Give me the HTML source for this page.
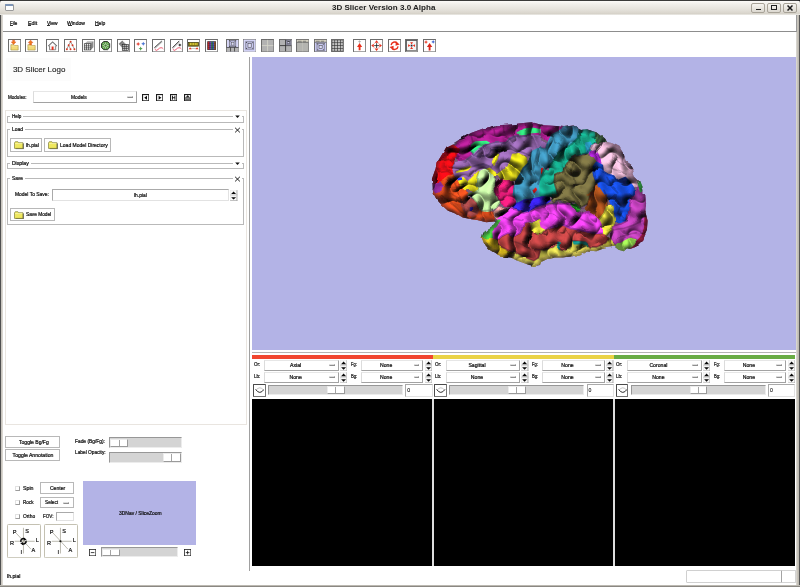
<!DOCTYPE html><html><head><meta charset="utf-8"><title>3D Slicer</title><style>
html,body{margin:0;padding:0;}
body{width:800px;height:587px;overflow:hidden;background:#fff;font-family:"Liberation Sans",sans-serif;font-size:5px;color:#111;position:relative;}
div,span,svg{position:absolute;box-sizing:border-box;}
.t{white-space:nowrap;line-height:1;color:#111;-webkit-text-stroke:0.22px #111;}
#root{left:0;top:0;width:800px;height:587px;will-change:transform;}
.btn{background:#fff;border:1px solid #b8b8b8;}
.lf{border:1px solid #b9b9b9;}
.lbl{background:#fff;padding:0 2px;}
.trough{background:#d4d4d4;border-top:1px solid #979797;border-left:1px solid #979797;border-bottom:1px solid #ececec;border-right:1px solid #ececec;}
.thumb{background:#fff;border-top:0.6px solid #ececec;border-left:0.6px solid #ececec;border-right:1px solid #9a9a9a;border-bottom:1px solid #9a9a9a;}
.thumb i{position:absolute;left:50%;top:0;bottom:0;width:0.9px;background:#a4a4a4;margin-left:-0.6px}
.ent{background:#fff;border-top:1px solid #aaa;border-left:1px solid #aaa;border-right:1px solid #e2e2e2;border-bottom:1px solid #e2e2e2;}
.dd{background:#fff;border-top:1px solid #e6e6e6;border-left:1px solid #dcdcdc;border-right:1px solid #a2a2a2;border-bottom:1px solid #a2a2a2;}
.ind{width:5.8px;height:2.3px;background:#efefef;border-top:0.5px solid #dedede;border-left:0.5px solid #dedede;border-bottom:0.7px solid #8e8e8e;border-right:0.7px solid #8e8e8e;}
</style></head><body><div id="root">
<div style="left:0;top:0;width:800px;height:587px;background:#fff;"></div>
<div style="left:0;top:0;width:800px;height:15.2px;background:linear-gradient(#3a3a3a 0,#3a3a3a 0.5px,#fbfaf8 1.1px,#f1efeb 4px,#e6e3dd 9px,#d9d5cc 13.4px,#cdc9c0 14px,#f4f3f0 14.8px,#fff 15.2px);"></div>
<svg style="left:0;top:0;" width="800" height="4" viewBox="0 0 800 4"><path d="M0 0H3.2A3.2 3.2 0 0 0 0 3.2Z M800 0H796.8A3.2 3.2 0 0 1 800 3.2Z" fill="#1a1a1a"/></svg>
<div class="t" style="left:331.9px;top:4px;font-size:8px;font-weight:bold;color:#222;-webkit-text-stroke:0;transform:scaleX(1.005);transform-origin:0 0;">3D Slicer Version 3.0 Alpha</div>
<div style="left:4.9px;top:4.1px;width:9px;height:6.9px;background:#fdfdfd;border:0.8px solid #9a9a9a;border-radius:1px;"></div>
<div style="left:5.3px;top:4.4px;width:8.2px;height:1.5px;background:#7d94b6;border-radius:0.6px 0.6px 0 0;"></div>
<div style="left:751px;top:2.5px;width:14px;height:10.5px;border:1px solid #a8a398;border-radius:2px;background:linear-gradient(#f6f4f0,#dcd8d0);"></div>
<div style="left:767px;top:2.5px;width:14px;height:10.5px;border:1px solid #a8a398;border-radius:2px;background:linear-gradient(#f6f4f0,#dcd8d0);"></div>
<div style="left:782.5px;top:2.5px;width:14px;height:10.5px;border:1px solid #a8a398;border-radius:2px;background:linear-gradient(#f6f4f0,#dcd8d0);"></div>
<div style="left:755.5px;top:8.5px;width:5px;height:1.6px;background:#222;"></div>
<div style="left:771px;top:5px;width:5.6px;height:5px;border:1px solid #222;border-top:1.8px solid #222;"></div>
<svg style="left:786.5px;top:5px;" width="6" height="6" viewBox="0 0 6 6"><path d="M0.5 0.5L5.5 5.5M5.5 0.5L0.5 5.5" stroke="#1a1a1a" stroke-width="1.5"/></svg>
<div style="left:0;top:14.6px;width:3.4px;height:572.4px;background:linear-gradient(90deg,#505050 0,#505050 0.7px,#bfbbb3 0.9px,#dcd9d3 2.6px,#fff 3.4px);"></div>
<div style="left:796px;top:15px;width:4px;height:572px;background:linear-gradient(90deg,#fff 0,#cfccc5 0.6px,#bdb9b0 2.6px,#555 3.2px);"></div>
<div style="left:0;top:584.5px;width:800px;height:2.5px;background:linear-gradient(#c9c6bf,#aaa69e 60%,#555);"></div>
<div style="left:3px;top:15px;width:793.5px;height:16.5px;background:#fff;border-bottom:1px solid #8d8d8d;border-right:1px solid #9a9a9a;"></div>
<div class="t" style="left:10.10px;top:20.59px;font-size:5.3px;transform:scaleX(0.870);transform-origin:0 0;">File</div>
<div style="left:10.20px;top:25.45px;width:2.82px;height:0.5px;background:#333;"></div>
<div class="t" style="left:27.65px;top:20.59px;font-size:5.3px;transform:scaleX(1.018);transform-origin:0 0;">Edit</div>
<div style="left:27.75px;top:25.45px;width:3.60px;height:0.5px;background:#333;"></div>
<div class="t" style="left:47.00px;top:20.59px;font-size:5.3px;transform:scaleX(0.919);transform-origin:0 0;">View</div>
<div style="left:47.10px;top:25.45px;width:3.25px;height:0.5px;background:#333;"></div>
<div class="t" style="left:67.40px;top:20.59px;font-size:5.3px;transform:scaleX(0.950);transform-origin:0 0;">Window</div>
<div style="left:67.50px;top:25.45px;width:4.75px;height:0.5px;background:#333;"></div>
<div class="t" style="left:94.90px;top:20.59px;font-size:5.3px;transform:scaleX(0.946);transform-origin:0 0;">Help</div>
<div style="left:95.00px;top:25.45px;width:3.62px;height:0.5px;background:#333;"></div>
<svg style="left:7.8px;top:38.8px;" width="13.2" height="13.4" viewBox="0 0 21 21.3" preserveAspectRatio="none"><rect x="0.8" y="0.8" width="19.4" height="19.7" fill="#fff" stroke="#6c6c6c" stroke-width="1.6"/><path d="M4.6 17.6V9H9.6L10.6 10.4H16.2V17.6Z" fill="#f2da78" stroke="#a08a38" stroke-width="0.9"/><path d="M5.2 11.4H15.6" stroke="#fbeeb0" stroke-width="0.8"/><path d="M7.4 1.8H10.4V4.6H12.6L8.9 8.6L5.2 4.6H7.4Z" fill="#f07a1c" stroke="#d8441a" stroke-width="0.7"/><path d="M0.4 21H20.8V0.6" fill="none" stroke="#b8b8b8" stroke-width="0.7"/></svg>
<svg style="left:25.0px;top:38.8px;" width="13.2" height="13.4" viewBox="0 0 21 21.3" preserveAspectRatio="none"><rect x="0.8" y="0.8" width="19.4" height="19.7" fill="#fff" stroke="#6c6c6c" stroke-width="1.6"/><path d="M4.6 17.6V9H9.6L10.6 10.4H16.2V17.6Z" fill="#f2da78" stroke="#a08a38" stroke-width="0.9"/><path d="M5.2 11.4H15.6" stroke="#fbeeb0" stroke-width="0.8"/><path d="M7.4 9.4H10.4V5.8H12.6L8.9 1.8L5.2 5.8H7.4Z" fill="#f07a1c" stroke="#d8441a" stroke-width="0.7"/><path d="M0.4 21H20.8V0.6" fill="none" stroke="#b8b8b8" stroke-width="0.7"/></svg>
<svg style="left:46.3px;top:38.8px;" width="13.2" height="13.4" viewBox="0 0 21 21.3" preserveAspectRatio="none"><rect x="0.8" y="0.8" width="19.4" height="19.7" fill="#fff" stroke="#6c6c6c" stroke-width="1.6"/><path d="M3.6 11.2L10.5 4.6L17.4 11.2" fill="none" stroke="#6e6e6e" stroke-width="1.7"/><path d="M5.6 10.4V17.2H15.4V10.4" fill="#f4f4f4" stroke="#7a7a7a" stroke-width="1.4"/><rect x="9" y="12" width="3" height="5.4" fill="#e8301c"/><path d="M0.4 21H20.8V0.6" fill="none" stroke="#b8b8b8" stroke-width="0.7"/></svg>
<svg style="left:64.0px;top:38.8px;" width="13.2" height="13.4" viewBox="0 0 21 21.3" preserveAspectRatio="none"><rect x="0.8" y="0.8" width="19.4" height="19.7" fill="#fff" stroke="#6c6c6c" stroke-width="1.6"/><path d="M10.5 4.4L7.4 10L4.6 16M7.4 10L10.4 16M10.5 4.4L13.6 10L16.6 16" fill="none" stroke="#555" stroke-width="0.9"/><g fill="#d8341c"><circle cx="10.5" cy="4.2" r="1.5"/><circle cx="7.4" cy="10" r="1.5"/><circle cx="13.6" cy="10" r="1.5"/><circle cx="4.6" cy="16.2" r="1.5"/><circle cx="10.4" cy="16.2" r="1.5"/><circle cx="16.6" cy="16.2" r="1.5"/></g><path d="M0.4 21H20.8V0.6" fill="none" stroke="#b8b8b8" stroke-width="0.7"/></svg>
<svg style="left:81.8px;top:38.8px;" width="13.2" height="13.4" viewBox="0 0 21 21.3" preserveAspectRatio="none"><rect x="0.8" y="0.8" width="19.4" height="19.7" fill="#fff" stroke="#6c6c6c" stroke-width="1.6"/><path d="M4 7.6L8.4 3.6H18L18 13L14 17Z" fill="#b4b4b4"/><path d="M14 7.6L18 3.6V13L14 17Z" fill="#8a8a8a"/><rect x="3.6" y="7.6" width="10.4" height="9.8" fill="#fff" stroke="#222" stroke-width="1"/><path d="M7.1 7.6V17.4M10.5 7.6V17.4M3.6 10.9H14M3.6 14.1H14" stroke="#222" stroke-width="1"/><path d="M0.4 21H20.8V0.6" fill="none" stroke="#b8b8b8" stroke-width="0.7"/></svg>
<svg style="left:99.0px;top:38.8px;" width="13.2" height="13.4" viewBox="0 0 21 21.3" preserveAspectRatio="none"><rect x="0.8" y="0.8" width="19.4" height="19.7" fill="#fff" stroke="#6c6c6c" stroke-width="1.6"/><path d="M7.4 4L13.6 4L17 7.4V13.6L13.6 17H7.4L4 13.6V7.4Z" fill="#5a9a48" stroke="#262626" stroke-width="1.4"/><path d="M10.5 5.6V15.4M5.6 10.5H15.4M7 7L14 14M14 7L7 14" stroke="#cfe6c4" stroke-width="1.2"/><circle cx="10.5" cy="10.5" r="1.8" fill="#467f38"/><path d="M0.4 21H20.8V0.6" fill="none" stroke="#b8b8b8" stroke-width="0.7"/></svg>
<svg style="left:116.8px;top:38.8px;" width="13.2" height="13.4" viewBox="0 0 21 21.3" preserveAspectRatio="none"><rect x="0.8" y="0.8" width="19.4" height="19.7" fill="#fff" stroke="#6c6c6c" stroke-width="1.6"/><path d="M2.6 7.4L8.4 2.4L16 10.6L9.6 15.6Z" fill="#8c8c8c"/><path d="M4 8.6L9.6 3.6M6 10.6L11.6 5.6M8 12.6L13.6 7.6" stroke="#555" stroke-width="0.7"/><rect x="8.4" y="8.6" width="9.6" height="9.4" fill="#d8d8d8" stroke="#222" stroke-width="1"/><path d="M11.6 8.6V18M14.8 8.6V18M8.4 11.7H18M8.4 14.9H18" stroke="#222" stroke-width="1"/><path d="M0.4 21H20.8V0.6" fill="none" stroke="#b8b8b8" stroke-width="0.7"/></svg>
<svg style="left:134.3px;top:38.8px;" width="13.2" height="13.4" viewBox="0 0 21 21.3" preserveAspectRatio="none"><rect x="0.8" y="0.8" width="19.4" height="19.7" fill="#fff" stroke="#6c6c6c" stroke-width="1.6"/><path d="M6.6 4.7L7.656 6.944L9.899999999999999 8L7.656 9.056000000000001L6.6 11.3L5.544 9.056000000000001L3.3 8L5.544 6.944Z" fill="#e8483a"/><path d="M14.8 4.3L15.856000000000002 6.544L18.1 7.6L15.856000000000002 8.655999999999999L14.8 10.899999999999999L13.744 8.655999999999999L11.5 7.6L13.744 6.544Z" fill="#4c78d6"/><path d="M10.6 11.899999999999999L11.655999999999999 14.143999999999998L13.899999999999999 15.2L11.655999999999999 16.256L10.6 18.5L9.544 16.256L7.3 15.2L9.544 14.143999999999998Z" fill="#4c9c4c"/><path d="M0.4 21H20.8V0.6" fill="none" stroke="#b8b8b8" stroke-width="0.7"/></svg>
<svg style="left:152.0px;top:38.8px;" width="13.2" height="13.4" viewBox="0 0 21 21.3" preserveAspectRatio="none"><rect x="0.8" y="0.8" width="19.4" height="19.7" fill="#fff" stroke="#6c6c6c" stroke-width="1.6"/><path d="M4.6 14.8L16.4 4.2" stroke="#bdbdbd" stroke-width="1.6"/><path d="M3.8 13.8L15.6 3.2" stroke="#1e1e1e" stroke-width="1.3"/><path d="M4.4 16.2Q6.6 19.8 9.4 16.8T14.4 13.8T18 15.8" fill="none" stroke="#e8304c" stroke-width="1.25"/><path d="M0.4 21H20.8V0.6" fill="none" stroke="#b8b8b8" stroke-width="0.7"/></svg>
<svg style="left:169.5px;top:38.8px;" width="13.2" height="13.4" viewBox="0 0 21 21.3" preserveAspectRatio="none"><rect x="0.8" y="0.8" width="19.4" height="19.7" fill="#fff" stroke="#6c6c6c" stroke-width="1.6"/><path d="M4.6 14.8L15.4 4.2" stroke="#bdbdbd" stroke-width="1.6"/><path d="M3.8 13.8L14.6 3.2" stroke="#1e1e1e" stroke-width="1.3"/><path d="M4.4 16.2Q6.6 19.8 9.4 16.8T14.4 13.8T18 15.8" fill="none" stroke="#e8304c" stroke-width="1.25"/><circle cx="15.6" cy="9.6" r="1.6" fill="#2a2a2a"/><path d="M13 9.6H18.2M15.6 7V12.2" stroke="#444" stroke-width="0.8"/><path d="M0.4 21H20.8V0.6" fill="none" stroke="#b8b8b8" stroke-width="0.7"/></svg>
<svg style="left:187.0px;top:38.8px;" width="13.2" height="13.4" viewBox="0 0 21 21.3" preserveAspectRatio="none"><rect x="0.8" y="0.8" width="19.4" height="19.7" fill="#fff" stroke="#6c6c6c" stroke-width="1.6"/><rect x="2.6" y="5.4" width="15.8" height="6" fill="#857818" stroke="#3a340c" stroke-width="1.1"/><path d="M5.4 6.2V9.6M8 6.2V9.6M10.6 6.2V9.6M13.2 6.2V9.6M15.8 6.2V9.6" stroke="#f4e444" stroke-width="1.3"/><path d="M5 15.2H16" stroke="#999" stroke-width="0.9"/><path d="M2.6 16.4L5 13L7.4 16.4Z M13.6 16.4L16 13L18.4 16.4Z" fill="#e8341c"/><path d="M0.4 21H20.8V0.6" fill="none" stroke="#b8b8b8" stroke-width="0.7"/></svg>
<svg style="left:204.8px;top:38.8px;" width="13.2" height="13.4" viewBox="0 0 21 21.3" preserveAspectRatio="none"><rect x="0.8" y="0.8" width="19.4" height="19.7" fill="#fff" stroke="#6c6c6c" stroke-width="1.6"/><rect x="3.6" y="3.6" width="13.8" height="13.8" fill="#2a2a2a"/><rect x="4.4" y="4.4" width="2.6" height="12.2" fill="#c82828"/><rect x="7.2" y="4.4" width="2.4" height="12.2" fill="#7a3ab0"/><rect x="9.8" y="4.4" width="2.4" height="12.2" fill="#3a8a6a"/><rect x="12.4" y="4.4" width="2" height="12.2" fill="#3a58b8"/><rect x="14.6" y="4.4" width="2" height="12.2" fill="#a8582a"/><path d="M4.4 7.4H16.6M4.4 10.6H16.6M4.4 13.6H16.6" stroke="#2a2a2a" stroke-width="0.7" opacity="0.75"/><path d="M0.4 21H20.8V0.6" fill="none" stroke="#b8b8b8" stroke-width="0.7"/></svg>
<svg style="left:225.8px;top:38.8px;" width="13.2" height="13.4" viewBox="0 0 21 21.3" preserveAspectRatio="none"><rect x="0.8" y="0.8" width="19.4" height="19.7" fill="#c9c9f2" stroke="#6c6c6c" stroke-width="1.6"/><rect x="5.4" y="2.6" width="10.2" height="9.6" fill="none" stroke="#555" stroke-width="0.9"/><rect x="8.256" y="5.0" width="4.4879999999999995" height="4.8" fill="#dcdcf6" stroke="#444" stroke-width="0.9"/><path d="M5.4 2.6l1.6 1.6M15.6 2.6l-1.6 1.6M5.4 12.2l1.6 -1.6M15.6 12.2l-1.6 -1.6" stroke="#222" stroke-width="1.2"/><rect x="1.2" y="13.6" width="18.6" height="6.2" fill="#b4b4b4"/><path d="M1 13.4H20M7.2 13.4V20M13.6 13.4V20" stroke="#333" stroke-width="1.2"/><rect x="1.6" y="1.6" width="2.4" height="11" fill="#d8d8f6"/><rect x="17" y="1.6" width="2.4" height="11" fill="#d8d8f6"/><path d="M0.4 21H20.8V0.6" fill="none" stroke="#b8b8b8" stroke-width="0.7"/></svg>
<svg style="left:243.3px;top:38.8px;" width="13.2" height="13.4" viewBox="0 0 21 21.3" preserveAspectRatio="none"><rect x="0.8" y="0.8" width="19.4" height="19.7" fill="#c9c9f2" stroke="#6c6c6c" stroke-width="1.6"/><rect x="4.6" y="4.6" width="11.8" height="11.4" fill="none" stroke="#555" stroke-width="0.9"/><rect x="7.904" y="7.449999999999999" width="5.192" height="5.7" fill="#dcdcf6" stroke="#444" stroke-width="0.9"/><path d="M4.6 4.6l1.6 1.6M16.4 4.6l-1.6 1.6M4.6 16.0l1.6 -1.6M16.4 16.0l-1.6 -1.6" stroke="#222" stroke-width="1.2"/><rect x="1.6" y="1.6" width="17.8" height="17.8" fill="none" stroke="#e2e2fa" stroke-width="1.4"/><path d="M0.4 21H20.8V0.6" fill="none" stroke="#b8b8b8" stroke-width="0.7"/></svg>
<svg style="left:261.0px;top:38.8px;" width="13.2" height="13.4" viewBox="0 0 21 21.3" preserveAspectRatio="none"><rect x="0.8" y="0.8" width="19.4" height="19.7" fill="#b2b2b2" stroke="#6c6c6c" stroke-width="1.6"/><path d="M10.5 1.4V19.6M1.4 10.5H19.6" stroke="#d8d8cc" stroke-width="1.2"/><path d="M0.4 21H20.8V0.6" fill="none" stroke="#b8b8b8" stroke-width="0.7"/></svg>
<svg style="left:278.8px;top:38.8px;" width="13.2" height="13.4" viewBox="0 0 21 21.3" preserveAspectRatio="none"><rect x="0.8" y="0.8" width="19.4" height="19.7" fill="#b2b2b2" stroke="#6c6c6c" stroke-width="1.6"/><path d="M10.5 1.4V19.6M1.4 10.5H19.6" stroke="#333" stroke-width="1.4"/><rect x="11.2" y="1.4" width="8.4" height="8.4" fill="#c9c9f2"/><rect x="12.4" y="2.6" width="6" height="6" fill="none" stroke="#555" stroke-width="0.9"/><rect x="14.08" y="4.1" width="2.64" height="3.0" fill="#dcdcf6" stroke="#444" stroke-width="0.9"/><path d="M12.4 2.6l1.6 1.6M18.4 2.6l-1.6 1.6M12.4 8.6l1.6 -1.6M18.4 8.6l-1.6 -1.6" stroke="#222" stroke-width="1.2"/><path d="M0.4 21H20.8V0.6" fill="none" stroke="#b8b8b8" stroke-width="0.7"/></svg>
<svg style="left:296.0px;top:38.8px;" width="13.2" height="13.4" viewBox="0 0 21 21.3" preserveAspectRatio="none"><rect x="0.8" y="0.8" width="19.4" height="19.7" fill="#b4b4b0" stroke="#6c6c6c" stroke-width="1.6"/><rect x="1.4" y="1.4" width="18.2" height="3.6" fill="#d8d4c4"/><path d="M1.4 5.2H19.6" stroke="#444" stroke-width="1"/><path d="M3 3.6H9M11 3.6H16" stroke="#666" stroke-width="1.2"/><path d="M10.5 5.4V19.6" stroke="#c8c8c0" stroke-width="0.8"/><path d="M0.4 21H20.8V0.6" fill="none" stroke="#b8b8b8" stroke-width="0.7"/></svg>
<svg style="left:313.8px;top:38.8px;" width="13.2" height="13.4" viewBox="0 0 21 21.3" preserveAspectRatio="none"><rect x="0.8" y="0.8" width="19.4" height="19.7" fill="#c9c9f2" stroke="#6c6c6c" stroke-width="1.6"/><rect x="1.4" y="1.4" width="18.2" height="3.6" fill="#d8d4c4"/><path d="M1.4 5.2H19.6" stroke="#444" stroke-width="1"/><path d="M3 3.6H9M11 3.6H16" stroke="#666" stroke-width="1.2"/><rect x="4.8" y="7.4" width="11.4" height="10.6" fill="none" stroke="#555" stroke-width="0.9"/><rect x="7.992000000000001" y="10.05" width="5.016" height="5.3" fill="#dcdcf6" stroke="#444" stroke-width="0.9"/><path d="M4.8 7.4l1.6 1.6M16.2 7.4l-1.6 1.6M4.8 18.0l1.6 -1.6M16.2 18.0l-1.6 -1.6" stroke="#222" stroke-width="1.2"/><path d="M0.4 21H20.8V0.6" fill="none" stroke="#b8b8b8" stroke-width="0.7"/></svg>
<svg style="left:331.3px;top:38.8px;" width="13.2" height="13.4" viewBox="0 0 21 21.3" preserveAspectRatio="none"><rect x="0.8" y="0.8" width="19.4" height="19.7" fill="#303030" stroke="#6c6c6c" stroke-width="1.6"/><rect x="2.0" y="2.0" width="3.5" height="3.5" fill="#c2c2c2"/><rect x="2.0" y="6.45" width="3.5" height="3.5" fill="#c2c2c2"/><rect x="2.0" y="10.9" width="3.5" height="3.5" fill="#c2c2c2"/><rect x="2.0" y="15.350000000000001" width="3.5" height="3.5" fill="#c2c2c2"/><rect x="6.45" y="2.0" width="3.5" height="3.5" fill="#c2c2c2"/><rect x="6.45" y="6.45" width="3.5" height="3.5" fill="#c2c2c2"/><rect x="6.45" y="10.9" width="3.5" height="3.5" fill="#c2c2c2"/><rect x="6.45" y="15.350000000000001" width="3.5" height="3.5" fill="#c2c2c2"/><rect x="10.9" y="2.0" width="3.5" height="3.5" fill="#c2c2c2"/><rect x="10.9" y="6.45" width="3.5" height="3.5" fill="#c2c2c2"/><rect x="10.9" y="10.9" width="3.5" height="3.5" fill="#c2c2c2"/><rect x="10.9" y="15.350000000000001" width="3.5" height="3.5" fill="#c2c2c2"/><rect x="15.350000000000001" y="2.0" width="3.5" height="3.5" fill="#c2c2c2"/><rect x="15.350000000000001" y="6.45" width="3.5" height="3.5" fill="#c2c2c2"/><rect x="15.350000000000001" y="10.9" width="3.5" height="3.5" fill="#c2c2c2"/><rect x="15.350000000000001" y="15.350000000000001" width="3.5" height="3.5" fill="#c2c2c2"/><path d="M0.4 21H20.8V0.6" fill="none" stroke="#b8b8b8" stroke-width="0.7"/></svg>
<svg style="left:352.6px;top:38.8px;" width="13.2" height="13.4" viewBox="0 0 21 21.3" preserveAspectRatio="none"><rect x="0.8" y="0.8" width="19.4" height="19.7" fill="#fff" stroke="#6c6c6c" stroke-width="1.6"/><path d="M10.5 1.6L11.332 3.3680000000000003L13.1 4.2L11.332 5.032L10.5 6.800000000000001L9.668 5.032L7.9 4.2L9.668 3.3680000000000003Z" fill="#b0b0b0"/><path d="M10.5 6.2L14.6 12.6H12V17.8H9V12.6H6.4Z" fill="#e8301c"/><path d="M0.4 21H20.8V0.6" fill="none" stroke="#b8b8b8" stroke-width="0.7"/></svg>
<svg style="left:370.0px;top:38.8px;" width="13.2" height="13.4" viewBox="0 0 21 21.3" preserveAspectRatio="none"><rect x="0.8" y="0.8" width="19.4" height="19.7" fill="#fff" stroke="#6c6c6c" stroke-width="1.6"/><path d="M10.5 2L13.6 6H7.4Z M10.5 19L13.6 15H7.4Z M2 10.5L6 7.4V13.6Z M19 10.5L15 7.4V13.6Z" fill="#e8301c"/><path d="M10.5 6.6V14.4M6.6 10.5H14.4" stroke="#222" stroke-width="1.3"/><path d="M6.2 6.2L7.6 7.6M14.8 6.2L13.4 7.6M6.2 14.8L7.6 13.4M14.8 14.8L13.4 13.4" stroke="#e8604c" stroke-width="0.8"/><path d="M0.4 21H20.8V0.6" fill="none" stroke="#b8b8b8" stroke-width="0.7"/></svg>
<svg style="left:387.8px;top:38.8px;" width="13.2" height="13.4" viewBox="0 0 21 21.3" preserveAspectRatio="none"><rect x="0.8" y="0.8" width="19.4" height="19.7" fill="#fff" stroke="#6c6c6c" stroke-width="1.6"/><path d="M5 9.6A5.6 5.6 0 0 1 14.4 6.4" fill="none" stroke="#e8301c" stroke-width="2.2"/><path d="M12.4 3.4L18.6 8.6L12 10.8Z" fill="#e8301c"/><path d="M16 11.8A5.6 5.6 0 0 1 6.6 15" fill="none" stroke="#e8301c" stroke-width="2.2"/><path d="M8.6 18L2.4 12.8L9 10.6Z" fill="#e8301c"/><path d="M0.4 21H20.8V0.6" fill="none" stroke="#b8b8b8" stroke-width="0.7"/></svg>
<svg style="left:405.1px;top:38.8px;" width="13.2" height="13.4" viewBox="0 0 21 21.3" preserveAspectRatio="none"><rect x="0.8" y="0.8" width="19.4" height="19.7" fill="#fff" stroke="#6c6c6c" stroke-width="1.6"/><rect x="2.4" y="2.4" width="16.2" height="16.2" fill="#f4f4f4" stroke="#555" stroke-width="1.4"/><path d="M18.8 3V18.8H3" stroke="#999" stroke-width="1.4" fill="none"/><path d="M10.5 8.6L8.2 5H12.8Z M10.5 12.4L8.2 16H12.8Z M8.6 10.5L5 8.2V12.8Z M12.4 10.5L16 8.2V12.8Z" fill="#e8301c"/><rect x="9.1" y="9.1" width="2.8" height="2.8" fill="#1a2a3a"/><path d="M0.4 21H20.8V0.6" fill="none" stroke="#b8b8b8" stroke-width="0.7"/></svg>
<svg style="left:423.0px;top:38.8px;" width="13.2" height="13.4" viewBox="0 0 21 21.3" preserveAspectRatio="none"><rect x="0.8" y="0.8" width="19.4" height="19.7" fill="#fff" stroke="#6c6c6c" stroke-width="1.6"/><path d="M4.8 1.6999999999999997L5.792 3.808L7.9 4.8L5.792 5.792L4.8 7.9L3.808 5.792L1.6999999999999997 4.8L3.808 3.808Z" fill="#e8402c"/><path d="M16.2 1.4999999999999996L17.192 3.6079999999999997L19.3 4.6L17.192 5.592L16.2 7.699999999999999L15.207999999999998 5.592L13.1 4.6L15.207999999999998 3.6079999999999997Z" fill="#3a62d0"/><path d="M10.5 6.4L14.8 12.8H12V18.4H9V12.8H6.2Z" fill="#d8281c"/><path d="M0.4 21H20.8V0.6" fill="none" stroke="#b8b8b8" stroke-width="0.7"/></svg>
<div style="left:6px;top:57.5px;width:64.5px;height:23.5px;background:#fcfcfc;"></div>
<div class="t" style="left:12.90px;top:66.12px;font-size:8px;-webkit-text-stroke:0.12px #222;color:#222;">3D Slicer Logo</div>
<div class="t" style="left:8.00px;top:94.66px;font-size:5.15px;transform:scaleX(0.886);transform-origin:0 0;">Modules:</div>
<div class="dd" style="left:32.6px;top:91.3px;width:104px;height:11.4px;"></div>
<div class="t" style="left:70.90px;top:94.66px;font-size:5.15px;transform:scaleX(0.952);transform-origin:0 0;">Models</div>
<div class="ind" style="left:127.4px;top:95.6px;"></div>
<svg style="left:141.9px;top:93.7px;" width="7.4" height="7.4" viewBox="0 0 7.4 7.4"><rect x="0.55" y="0.55" width="6.3" height="6.3" fill="#fff" stroke="#1c1c1c" stroke-width="1.1"/><path d="M5 1.7L2.2 3.7L5 5.7Z" fill="#0a0a0a"/></svg>
<svg style="left:155.9px;top:93.7px;" width="7.4" height="7.4" viewBox="0 0 7.4 7.4"><rect x="0.55" y="0.55" width="6.3" height="6.3" fill="#fff" stroke="#1c1c1c" stroke-width="1.1"/><path d="M2.6 1.7L5.4 3.7L2.6 5.7Z" fill="#0a0a0a"/></svg>
<svg style="left:169.9px;top:93.7px;" width="7.4" height="7.4" viewBox="0 0 7.4 7.4"><rect x="0.55" y="0.55" width="6.3" height="6.3" fill="#fff" stroke="#1c1c1c" stroke-width="1.1"/><path d="M2.5 1.7V5.7M4.9 1.7V5.7M2.5 3.7H4.9" stroke="#0a0a0a" stroke-width="0.9" fill="none"/></svg>
<svg style="left:183.9px;top:93.7px;" width="7.4" height="7.4" viewBox="0 0 7.4 7.4"><rect x="0.55" y="0.55" width="6.3" height="6.3" fill="#fff" stroke="#1c1c1c" stroke-width="1.1"/><rect x="1.8" y="3.3" width="3.8" height="2.6" fill="#8a8a8a" stroke="#222" stroke-width="0.5"/><path d="M3.7 1.1L5.4 3.1H2Z" fill="#222"/></svg>
<div style="left:5px;top:110.4px;width:242.4px;height:314.8px;border:1px solid #e9e5e0;"></div>
<div class="lf" style="left:7.2px;top:116.1px;width:236.4px;height:7.1px;"></div>
<div style="left:10.4px;top:115.1px;width:12.8px;height:3px;background:#fff;"></div>
<div class="t" style="left:11.90px;top:114.16px;font-size:5.15px;transform:scaleX(0.890);transform-origin:0 0;">Help</div>
<svg style="left:232.8px;top:113.5px;background:#fff;" width="9" height="5" viewBox="0 0 9 5"><path d="M2.2 1.4L6.8 1.4L4.5 4Z" fill="#111"/></svg>
<div class="lf" style="left:7.2px;top:129.3px;width:236.4px;height:27.5px;"></div>
<div style="left:10.4px;top:128.3px;width:14.399999999999999px;height:3px;background:#fff;"></div>
<div class="t" style="left:11.90px;top:127.36px;font-size:5.15px;transform:scaleX(0.961);transform-origin:0 0;">Load</div>
<svg style="left:232.8px;top:126.50000000000001px;background:#fff;" width="9" height="6.4" viewBox="0 0 9 6.4"><path d="M2.1 0.8L6.9 5.4M6.9 0.8L2.1 5.4" stroke="#111" stroke-width="0.95"/></svg>
<div class="lf" style="left:7.2px;top:163.1px;width:236.4px;height:5.9px;"></div>
<div style="left:10.4px;top:162.1px;width:20.200000000000003px;height:3px;background:#fff;"></div>
<div class="t" style="left:11.90px;top:161.16px;font-size:5.15px;">Display</div>
<svg style="left:232.8px;top:160.5px;background:#fff;" width="9" height="5" viewBox="0 0 9 5"><path d="M2.2 1.4L6.8 1.4L4.5 4Z" fill="#111"/></svg>
<div class="lf" style="left:7.2px;top:178.4px;width:236.4px;height:46.8px;"></div>
<div style="left:10.4px;top:177.4px;width:14.3px;height:3px;background:#fff;"></div>
<div class="t" style="left:11.90px;top:176.46px;font-size:5.15px;transform:scaleX(0.930);transform-origin:0 0;">Save</div>
<svg style="left:232.8px;top:175.6px;background:#fff;" width="9" height="6.4" viewBox="0 0 9 6.4"><path d="M2.1 0.8L6.9 5.4M6.9 0.8L2.1 5.4" stroke="#111" stroke-width="0.95"/></svg>
<div class="btn" style="left:10.2px;top:138.4px;width:31.6px;height:13.4px;"></div>
<svg style="left:14.2px;top:141.4px;" width="10.4" height="8.4" viewBox="0 0 10.4 8.4"><path d="M1.6 2.4L9.8 2.4L9.8 8.1L1.6 8.1Z" fill="#555"/><path d="M0.5 1.9L1.3 0.7L3.9 0.7L4.6 1.7L8.9 1.7L8.9 7.4L0.5 7.4Z" fill="#efe85e" stroke="#6b6b2a" stroke-width="0.6"/><path d="M1 2.6L8.4 2.6" stroke="#fbf8b8" stroke-width="0.7"/></svg>
<div class="t" style="left:25.90px;top:142.96px;font-size:5.15px;transform:scaleX(0.952);transform-origin:0 0;">lh.pial</div>
<div class="btn" style="left:44.2px;top:138.4px;width:66.4px;height:13.4px;"></div>
<svg style="left:48.3px;top:141.4px;" width="10.4" height="8.4" viewBox="0 0 10.4 8.4"><path d="M1.6 2.4L9.8 2.4L9.8 8.1L1.6 8.1Z" fill="#555"/><path d="M0.5 1.9L1.3 0.7L3.9 0.7L4.6 1.7L8.9 1.7L8.9 7.4L0.5 7.4Z" fill="#efe85e" stroke="#6b6b2a" stroke-width="0.6"/><path d="M1 2.6L8.4 2.6" stroke="#fbf8b8" stroke-width="0.7"/></svg>
<div class="t" style="left:60.20px;top:142.96px;font-size:5.15px;transform:scaleX(0.977);transform-origin:0 0;">Load Model Directory</div>
<div class="t" style="left:15.15px;top:192.16px;font-size:5.15px;transform:scaleX(0.959);transform-origin:0 0;">Model To Save:</div>
<div class="ent" style="left:52.2px;top:189.3px;width:177px;height:11.4px;"></div>
<div class="t" style="left:134.30px;top:192.76px;font-size:5.15px;transform:scaleX(0.952);transform-origin:0 0;">lh.pial</div>
<svg style="left:230.4px;top:189.6px;" width="7.4" height="11.2" viewBox="0 0 7.4 11.2"><rect x="0" y="0" width="7.4" height="5.6" fill="#fafafa"/><path d="M0 5.1499999999999995H7.4M6.95 0V5.6" stroke="#a6a6a6" stroke-width="0.9" fill="none"/><path d="M0 0.3H6.5M0.3 0V4.699999999999999" stroke="#e9e9e9" stroke-width="0.6" fill="none"/><rect x="0" y="5.6" width="7.4" height="5.6" fill="#fafafa"/><path d="M0 10.75H7.4M6.95 5.6V11.2" stroke="#a6a6a6" stroke-width="0.9" fill="none"/><path d="M0 5.8999999999999995H6.5M0.3 5.6V10.299999999999999" stroke="#e9e9e9" stroke-width="0.6" fill="none"/><path d="M1.1 4.1L3.6 1.5L6.1 4.1Z" fill="#0a0a0a"/><path d="M1.1 7.199999999999999L3.6 9.6L6.1 7.199999999999999Z" fill="#0a0a0a"/></svg>
<div class="btn" style="left:10.2px;top:207.6px;width:44.8px;height:13.4px;"></div>
<svg style="left:14.4px;top:210.8px;" width="10.4" height="8.4" viewBox="0 0 10.4 8.4"><path d="M1.6 2.4L9.8 2.4L9.8 8.1L1.6 8.1Z" fill="#555"/><path d="M0.5 1.9L1.3 0.7L3.9 0.7L4.6 1.7L8.9 1.7L8.9 7.4L0.5 7.4Z" fill="#efe85e" stroke="#6b6b2a" stroke-width="0.6"/><path d="M1 2.6L8.4 2.6" stroke="#fbf8b8" stroke-width="0.7"/></svg>
<div class="t" style="left:26.40px;top:212.46px;font-size:5.15px;transform:scaleX(0.927);transform-origin:0 0;">Save Model</div>
<div class="btn" style="left:5.4px;top:436.2px;width:54.6px;height:11.5px;"></div>
<div class="t" style="left:18.60px;top:439.96px;font-size:5.15px;transform:scaleX(0.982);transform-origin:0 0;">Toggle Bg/Fg</div>
<div class="btn" style="left:5.4px;top:449.3px;width:54.6px;height:11.5px;"></div>
<div class="t" style="left:12.60px;top:452.96px;font-size:5.15px;">Toggle Annotation</div>
<div class="t" style="left:75.30px;top:438.66px;font-size:5.15px;transform:scaleX(0.945);transform-origin:0 0;">Fade (Bg/Fg):</div>
<div class="t" style="left:74.60px;top:450.46px;font-size:5.15px;transform:scaleX(0.933);transform-origin:0 0;">Label Opacity:</div>
<div class="trough" style="left:109.2px;top:437.2px;width:73px;height:11.2px;"></div>
<div class="thumb" style="left:110.4px;top:438.6px;width:17.6px;height:8.6px;"><i></i></div>
<div class="trough" style="left:109.2px;top:451.8px;width:73px;height:11.2px;"></div>
<div class="thumb" style="left:163.2px;top:453.2px;width:17.6px;height:8.6px;"><i></i></div>
<div style="left:14.9px;top:486.09999999999997px;width:4.7px;height:4.7px;background:#fff;border-top:0.7px solid #e2e2e2;border-left:0.7px solid #e2e2e2;border-right:0.9px solid #9c9c9c;border-bottom:0.9px solid #9c9c9c;"></div>
<div class="t" style="left:23.20px;top:486.16px;font-size:5.15px;transform:scaleX(1.018);transform-origin:0 0;">Spin</div>
<div style="left:14.9px;top:500.4px;width:4.7px;height:4.7px;background:#fff;border-top:0.7px solid #e2e2e2;border-left:0.7px solid #e2e2e2;border-right:0.9px solid #9c9c9c;border-bottom:0.9px solid #9c9c9c;"></div>
<div class="t" style="left:23.20px;top:500.46px;font-size:5.15px;transform:scaleX(0.897);transform-origin:0 0;">Rock</div>
<div style="left:14.9px;top:514.4000000000001px;width:4.7px;height:4.7px;background:#fff;border-top:0.7px solid #e2e2e2;border-left:0.7px solid #e2e2e2;border-right:0.9px solid #9c9c9c;border-bottom:0.9px solid #9c9c9c;"></div>
<div class="t" style="left:23.20px;top:514.46px;font-size:5.15px;transform:scaleX(0.940);transform-origin:0 0;">Ortho</div>
<div class="btn" style="left:40.3px;top:482.4px;width:33.6px;height:11.2px;"></div>
<div class="t" style="left:49.90px;top:486.26px;font-size:5.15px;">Center</div>
<div class="btn" style="left:40.3px;top:497px;width:33.6px;height:11.4px;"></div>
<div class="t" style="left:44.60px;top:500.36px;font-size:5.15px;transform:scaleX(0.916);transform-origin:0 0;">Select</div>
<div class="ind" style="left:63.4px;top:501.6px;"></div>
<div class="t" style="left:42.70px;top:514.26px;font-size:5.15px;transform:scaleX(0.890);transform-origin:0 0;">FOV:</div>
<div class="ent" style="left:56.4px;top:511.8px;width:17.5px;height:9.2px;"></div>
<div style="left:83.4px;top:480.9px;width:112.3px;height:63.8px;background:#b3b3e6;"></div>
<div class="t" style="left:118.50px;top:510.76px;font-size:5.15px;transform:scaleX(0.963);transform-origin:0 0;">3DNav / SliceZoom</div>
<svg style="left:89.2px;top:549.2px;" width="7.2" height="7.2" viewBox="0 0 7.2 7.2"><rect x="0.4" y="0.4" width="6.4" height="6.4" fill="#fff" stroke="#222" stroke-width="0.8"/><path d="M1.8 3.6H5.4" stroke="#111" stroke-width="0.8"/></svg>
<svg style="left:183.8px;top:549.2px;" width="7.2" height="7.2" viewBox="0 0 7.2 7.2"><rect x="0.4" y="0.4" width="6.4" height="6.4" fill="#fff" stroke="#222" stroke-width="0.8"/><path d="M1.8 3.6H5.4" stroke="#111" stroke-width="0.8"/><path d="M3.6 1.8V5.4" stroke="#111" stroke-width="0.8"/></svg>
<div class="trough" style="left:101.3px;top:547.2px;width:76.6px;height:10.2px;"></div>
<div class="thumb" style="left:102.4px;top:548.6px;width:17.4px;height:7.6px;"><i></i></div>
<svg style="left:7.2px;top:524.2px;" width="34" height="34.2" viewBox="0 0 34 34.2"><rect x="0.5" y="0.5" width="33" height="33.2" rx="0.8" fill="#fff" stroke="#c4c1b2" stroke-width="1"/><path d="M16.45 3.8V29.5M7.7 17.3H27.7M8.95 8.9L23.95 25.2" stroke="#a9a79a" stroke-width="0.8" fill="none"/><path d="M13.95 17.900000000000002A2.5 2.5 0 0 1 17.65 15.0" fill="none" stroke="#0a0a0a" stroke-width="1.5"/><path d="M18.95 16.7A2.5 2.5 0 0 1 15.25 19.6" fill="none" stroke="#0a0a0a" stroke-width="1.5"/><path d="M16.849999999999998 13.4L19.65 15.4L16.849999999999998 16.7Z M16.05 21.2L13.25 19.2L16.05 17.900000000000002Z" fill="#0a0a0a"/><g font-family="Liberation Sans" font-size="5.6" fill="#111" stroke="#111" stroke-width="0.2"><text x="7.7" y="10.350000000000001" text-anchor="middle">P</text><text x="20.2" y="8.85" text-anchor="middle">S</text><text x="30.2" y="17.85" text-anchor="middle">L</text><text x="4.95" y="20.95" text-anchor="middle">R</text><text x="14.2" y="30.1" text-anchor="middle">I</text><text x="26.45" y="27.85" text-anchor="middle">A</text></g></svg>
<svg style="left:43.6px;top:524.2px;" width="34" height="34.2" viewBox="0 0 34 34.2"><rect x="0.5" y="0.5" width="33" height="33.2" rx="0.8" fill="#fff" stroke="#c4c1b2" stroke-width="1"/><path d="M16.45 3.8V29.5M7.7 17.3H27.7M8.95 8.9L23.95 25.2" stroke="#a9a79a" stroke-width="0.8" fill="none"/><circle cx="16.45" cy="17.3" r="1.05" fill="#111"/><g font-family="Liberation Sans" font-size="5.6" fill="#111" stroke="#111" stroke-width="0.2"><text x="7.7" y="10.350000000000001" text-anchor="middle">P</text><text x="20.2" y="8.85" text-anchor="middle">S</text><text x="30.2" y="17.85" text-anchor="middle">L</text><text x="4.95" y="20.95" text-anchor="middle">R</text><text x="14.2" y="30.1" text-anchor="middle">I</text><text x="26.45" y="27.85" text-anchor="middle">A</text></g></svg>
<div style="left:248.7px;top:57.4px;width:1.5px;height:513.4px;background:#a0a0a0;"></div>
<div style="left:251.7px;top:57px;width:544px;height:293px;background:#b3b3e6;"></div>
<svg style="left:420px;top:105px;" width="240" height="170" viewBox="0 0 240 170"><defs><clipPath id="bc"><path d="M14.2 90.0 L12.7 84.7 L11.9 74.0 L15.7 63.2 L16.5 58.6 L21.1 51.0 L26.5 41.8 L32.6 38.7 L40.2 34.1 L51.0 28.0 L63.2 23.4 L77.0 20.3 L90.8 19.6 L103.1 18.0 L112.3 17.3 L120.0 19.6 L124.2 20.3 L136.5 21.1 L144.1 21.9 L153.3 20.3 L161.0 24.9 L167.1 24.2 L176.3 27.2 L184.0 33.4 L186.3 37.2 L191.6 38.0 L199.3 41.8 L203.9 49.4 L205.4 55.6 L210.0 58.6 L214.6 66.3 L213.1 70.9 L219.2 77.0 L222.3 84.7 L222.3 90.0 L225.3 90.0 L225.3 91.1 L226.1 98.8 L225.3 106.5 L227.6 115.7 L226.9 124.8 L222.3 135.6 L216.1 141.7 L210.0 144.0 L207.0 143.2 L203.9 146.3 L198.5 144.8 L194.7 141.7 L188.6 142.5 L182.4 144.0 L176.3 146.3 L167.1 145.5 L161.0 149.4 L153.3 150.9 L142.6 152.4 L134.9 152.4 L127.3 154.0 L121.1 157.0 L120.0 160.1 L115.3 160.9 L109.2 160.1 L103.1 157.8 L97.0 155.5 L90.8 152.4 L83.2 151.7 L77.0 149.4 L69.4 144.8 L64.0 138.6 L61.7 132.5 L63.2 127.9 L67.8 124.1 L72.4 121.0 L75.5 117.2 L74.0 116.4 L66.3 117.2 L57.1 114.9 L49.4 114.1 L41.8 112.6 L34.1 108.0 L28.0 105.7 L21.9 100.3 L16.5 94.2 L14.2 90.0Z"/></clipPath><filter id="bl" x="-5%" y="-5%" width="110%" height="110%"><feGaussianBlur stdDeviation="0.7"/></filter><filter id="b2" x="-10%" y="-10%" width="120%" height="120%"><feGaussianBlur stdDeviation="1.6"/></filter><filter id="dp" x="0" y="0" width="100%" height="100%"><feTurbulence type="fractalNoise" baseFrequency="0.11" numOctaves="1" seed="3" result="t"/><feDisplacementMap in="SourceGraphic" in2="t" scale="3.4" xChannelSelector="R" yChannelSelector="G"/></filter><filter id="gy" x="0" y="0" width="100%" height="100%" color-interpolation-filters="sRGB"><feTurbulence type="turbulence" baseFrequency="0.062" numOctaves="1" seed="11" result="n"/><feGaussianBlur in="n" stdDeviation="0.7" result="nb"/><feDiffuseLighting in="nb" surfaceScale="8.5" diffuseConstant="1" lighting-color="#fff" result="lit"><feDistantLight azimuth="235" elevation="56"/></feDiffuseLighting><feComposite in="lit" in2="SourceGraphic" operator="arithmetic" k1="1.22" k2="0" k3="0" k4="0" result="m"/><feComposite in="m" in2="SourceGraphic" operator="in"/></filter></defs><g filter="url(#dp)"><g clip-path="url(#bc)"><rect x="0" y="0" width="240" height="170" fill="#7a5a78"/><g filter="url(#gy)"><g filter="url(#bl)"><polygon points="61.7,132.5 64.0,138.6 69.4,144.8 77.0,149.4 83.2,151.7 90.8,152.4 97.0,155.5 103.1,157.8 109.2,160.1 115.3,160.9 120.0,158.6 120.0,160.1 121.1,157.0 127.3,154.0 134.9,152.4 142.6,152.4 153.3,150.9 161.0,149.4 167.1,145.5 176.3,146.3 182.4,144.0 188.6,142.5 196.2,142.0 191.6,134.0 176.3,127.9 120.0,126.4 120.0,127.9 72.4,131.0" fill="#cfc84e" stroke="#cfc84e" stroke-width="1.2" stroke-linejoin="round"/><polygon points="61.7,132.5 64.0,138.6 69.4,144.8 77.0,149.4 83.2,151.7 90.8,152.4 93.1,147.8 84.7,143.2 78.6,140.2 77.0,135.6 72.4,132.5 66.3,132.5" fill="#d2b31c" stroke="#d2b31c" stroke-width="1.2" stroke-linejoin="round"/><polygon points="34.9,40.2 40.2,34.1 51.0,28.0 63.2,23.4 77.0,20.3 90.8,19.6 103.1,18.0 112.3,17.3 120.0,19.6 124.2,20.3 136.5,21.1 143.4,22.6 138.0,26.5 131.9,30.3 128.8,35.7 124.2,34.1 120.0,31.1 120.0,28.0 118.4,29.5 106.1,29.5 97.0,31.1 87.8,34.9 81.6,38.0 69.4,39.5 63.2,41.8 57.1,45.6 54.0,49.4 51.0,51.7 44.8,56.3 38.7,55.6 34.1,51.0 35.7,43.3" fill="#a31b88" stroke="#a31b88" stroke-width="1.2" stroke-linejoin="round"/><polygon points="97.0,28.0 103.1,24.2 112.3,23.1 119.9,24.6 118.4,27.2 110.7,28.0 101.6,29.2" fill="#2fd474" stroke="#2fd474" stroke-width="1.2" stroke-linejoin="round"/><polygon points="51.0,39.5 55.6,36.9 66.3,36.4 69.4,38.0 63.2,41.8 57.9,45.2 54.0,48.7 50.2,45.2" fill="#2fd474" stroke="#2fd474" stroke-width="1.2" stroke-linejoin="round"/><polygon points="120.0,24.6 120.0,24.9 120.0,28.0 120.0,28.3" fill="#2fd474" stroke="#2fd474" stroke-width="1.2" stroke-linejoin="round"/><polygon points="14.2,81.6 11.9,74.0 15.7,63.2 16.5,58.6 21.1,51.0 26.5,41.8 32.6,38.7 35.7,41.0 39.5,44.8 35.7,49.4 34.9,51.0 33.4,58.6 31.1,63.2 32.6,67.8 28.0,70.9 23.4,74.0 19.6,77.0" fill="#e60f12" stroke="#e60f12" stroke-width="1.2" stroke-linejoin="round"/><polygon points="14.2,90.0 12.7,84.7 14.2,81.6 19.6,77.0 24.2,74.0 28.0,70.9 33.4,68.6 38.0,74.0 40.2,80.1 46.4,84.7 48.7,90.0 49.4,90.0 47.9,90.0 46.4,90.0 47.9,92.7 55.6,97.3 58.6,100.3 60.2,104.9 66.3,106.5 74.0,107.2 74.7,111.1 74.0,116.4 66.3,117.2 57.1,114.9 49.4,114.1 41.8,112.6 34.1,108.0 28.0,105.7 21.9,100.3 16.5,94.2 14.2,90.0 14.2,90.0" fill="#d2481c" stroke="#d2481c" stroke-width="1.2" stroke-linejoin="round"/><polygon points="13.9,78.6 19.1,77.0 22.2,81.6 20.9,86.5 16.6,87.8 13.6,84.4" fill="#8c2c94" stroke="#8c2c94" stroke-width="1.2" stroke-linejoin="round"/><polygon points="41.8,97.3 49.4,92.7 57.1,97.3 60.2,101.9 58.6,108.0 52.5,111.1 46.4,109.5 43.3,104.9" fill="#9c4444" stroke="#9c4444" stroke-width="1.2" stroke-linejoin="round"/><polygon points="50.4,102.8 52.5,102.8 52.5,105.5 50.4,105.5" fill="#2a1cb0" stroke="#2a1cb0" stroke-width="1.2" stroke-linejoin="round"/><polygon points="31.8,64.0 35.7,57.1 44.8,55.6 51.0,51.0 57.1,44.8 66.3,39.5 77.0,37.2 84.7,38.0 87.8,34.1 97.0,30.3 109.2,29.5 120.0,31.1 120.0,32.6 120.0,32.6 121.1,35.7 127.3,38.7 125.7,43.3 120.0,43.3 118.4,43.3 112.3,46.4 109.2,51.0 103.1,49.4 97.0,46.4 92.4,49.4 90.8,55.6 87.8,61.7 81.6,66.3 75.5,67.8 69.4,63.2 64.8,64.0 60.2,66.3 57.1,72.4 55.6,80.1 51.0,84.7 47.9,81.6 46.4,75.5 43.3,72.4 38.0,74.0 33.4,68.6" fill="#8e62a6" stroke="#8e62a6" stroke-width="1.2" stroke-linejoin="round"/><polygon points="90.8,55.6 92.4,49.4 100.0,48.7 106.1,52.5 107.7,58.6 103.1,63.2 100.0,69.4 97.0,75.5 87.8,76.3 81.6,74.0 77.0,69.4 81.6,66.3 87.8,61.7" fill="#d6cf1e" stroke="#d6cf1e" stroke-width="1.2" stroke-linejoin="round"/><polygon points="36.4,67.1 44.8,63.2 51.0,61.7 47.9,64.8 41.8,66.3" fill="#d6cf1e" stroke="#d6cf1e" stroke-width="1.2" stroke-linejoin="round"/><polygon points="38.0,75.5 43.3,72.4 47.1,77.0 51.0,74.0 55.6,69.4 58.6,66.3 57.1,72.4 55.6,80.1 58.6,84.7 54.0,87.8 49.4,83.2 44.8,84.7 40.2,80.1" fill="#d6cf1e" stroke="#d6cf1e" stroke-width="1.2" stroke-linejoin="round"/><polygon points="72.4,57.1 76.3,47.9 78.6,49.4 77.0,55.6 74.0,60.2" fill="#d6cf1e" stroke="#d6cf1e" stroke-width="1.2" stroke-linejoin="round"/><polygon points="63.2,65.5 69.4,63.2 75.5,67.8 77.0,70.9 72.4,70.1 67.8,67.1" fill="#d6cf1e" stroke="#d6cf1e" stroke-width="1.2" stroke-linejoin="round"/><polygon points="37.5,73.7 41.0,73.2 41.8,75.2 38.0,75.8" fill="#2a2ad0" stroke="#2a2ad0" stroke-width="1.2" stroke-linejoin="round"/><polygon points="60.2,66.3 64.8,64.0 69.4,66.3 74.0,72.4 77.0,78.6 75.5,84.7 77.0,90.0 77.0,90.0 78.6,91.1 80.1,97.3 77.0,101.9 72.4,104.9 66.3,106.5 61.7,105.7 59.4,101.1 57.1,97.3 51.0,91.1 47.9,90.0 48.7,90.0 49.4,87.8 54.0,87.8 58.6,84.7 56.3,80.1 57.1,72.4" fill="#b6df97" stroke="#b6df97" stroke-width="1.2" stroke-linejoin="round"/><polygon points="77.0,78.6 81.6,74.0 87.8,76.3 93.1,77.0 93.9,84.7 93.1,90.0 93.1,90.0 94.7,91.1 97.0,97.3 93.9,100.3 87.8,101.9 81.6,98.8 78.6,91.1 77.0,90.0 77.0,90.0 75.5,84.7" fill="#d41a70" stroke="#d41a70" stroke-width="1.2" stroke-linejoin="round"/><polygon points="94.7,91.1 103.1,94.2 112.3,92.7 120.0,91.1 120.0,101.9 115.3,103.4 109.2,106.5 103.1,108.0 97.0,104.9 90.8,103.4 93.9,100.3 97.0,97.3 120.0,91.1 121.1,90.4 128.8,91.1 130.3,95.7 124.2,100.3 120.0,101.9" fill="#3420d6" stroke="#3420d6" stroke-width="1.2" stroke-linejoin="round"/><polygon points="103.1,63.2 107.7,58.6 110.7,51.0 112.3,46.4 118.4,43.3 120.0,43.3 120.0,43.3 120.0,41.8 125.7,44.8 131.9,49.4 133.4,55.6 128.8,61.7 124.2,64.8 121.1,70.9 120.0,78.6 120.0,81.6 120.0,90.0 120.0,90.0 120.0,91.1 112.3,92.7 103.1,94.2 97.0,97.3 94.7,91.1 93.1,90.0 93.9,84.7 95.4,77.0 100.0,69.4" fill="#3a8aae" stroke="#3a8aae" stroke-width="1.2" stroke-linejoin="round"/><polygon points="127.3,38.7 131.9,29.5 138.0,26.5 144.1,22.6 153.3,21.1 159.4,24.9 157.9,32.6 151.8,38.7 145.7,41.8 139.5,46.4 134.9,51.0 131.9,49.4 125.7,44.1" fill="#3a8aae" stroke="#3a8aae" stroke-width="1.2" stroke-linejoin="round"/><polygon points="121.4,64.8 122.8,64.2 123.1,70.1 121.7,70.4" fill="#d01818" stroke="#d01818" stroke-width="1.2" stroke-linejoin="round"/><polygon points="112.9,86.2 115.7,83.2 116.4,84.8 113.8,87.9" fill="#d01818" stroke="#d01818" stroke-width="1.2" stroke-linejoin="round"/><polygon points="159.4,24.9 165.6,24.2 173.2,26.5 179.4,31.1 177.8,35.7 173.2,38.7 170.2,43.3 167.1,47.9 161.0,49.4 154.8,51.0 150.2,54.0 145.7,61.7 141.1,66.3 134.9,69.4 130.3,66.3 128.8,61.7 133.4,55.6 134.9,51.0 139.5,46.4 145.7,41.8 151.8,38.7 157.9,32.6" fill="#18a486" stroke="#18a486" stroke-width="1.2" stroke-linejoin="round"/><polygon points="121.1,70.9 124.2,64.8 130.3,66.3 134.9,69.4 134.2,77.0 136.5,84.7 138.0,90.0 133.4,90.0 133.4,90.0 138.0,90.0 134.9,92.7 128.8,91.1 121.1,90.4 120.0,91.1 120.0,90.0 120.0,81.6 120.0,78.6" fill="#18a486" stroke="#18a486" stroke-width="1.2" stroke-linejoin="round"/><polygon points="175.5,26.9 184.0,33.4 185.8,38.0 179.4,39.0 176.3,33.4" fill="#3b6b3d" stroke="#3b6b3d" stroke-width="1.2" stroke-linejoin="round"/><polygon points="165.6,38.0 170.2,37.2 172.5,41.8 170.2,45.6 167.1,48.7 166.3,43.3" fill="#2a9ac0" stroke="#2a9ac0" stroke-width="1.2" stroke-linejoin="round"/><polygon points="170.2,43.3 173.2,39.5 179.4,38.7 186.3,37.2 191.6,38.0 199.3,41.8 203.9,49.4 205.4,55.6 210.0,58.6 214.6,66.3 213.1,70.9 219.2,77.0 217.7,81.6 213.1,81.6 210.0,77.0 205.4,72.4 197.8,75.5 194.7,70.9 188.6,69.4 183.2,66.3 182.4,60.2 179.4,54.0 176.3,49.4" fill="#dcaec8" stroke="#dcaec8" stroke-width="1.2" stroke-linejoin="round"/><polygon points="169.4,47.1 176.3,45.6 180.1,54.0 180.9,58.6 176.3,57.1 171.7,52.5" fill="#a020c4" stroke="#a020c4" stroke-width="1.2" stroke-linejoin="round"/><polygon points="134.9,69.4 141.1,66.3 145.7,61.7 150.2,54.0 154.8,51.0 161.0,51.0 167.1,49.4 173.2,52.5 176.3,57.1 173.2,61.7 173.2,69.4 176.3,77.0 173.2,84.7 168.6,90.0 167.1,90.0 171.7,90.0 170.2,91.1 167.1,98.8 161.0,101.9 154.8,97.3 148.7,98.8 139.5,95.7 133.4,97.3 131.9,94.2 138.0,90.0 133.4,90.0 138.0,90.0 136.5,84.7 134.2,77.0" fill="#6f683c" stroke="#6f683c" stroke-width="1.2" stroke-linejoin="round"/><polygon points="173.2,61.7 176.3,57.1 182.4,60.2 183.2,66.3 188.6,69.4 194.7,70.9 197.8,75.5 205.4,72.4 210.0,77.0 213.1,81.6 216.1,87.8 214.6,90.0 214.6,90.0 213.1,91.1 210.0,98.8 208.5,108.0 207.0,115.7 200.8,118.7 194.7,115.7 193.2,108.0 191.6,100.3 188.6,94.2 184.0,90.0 184.0,90.0 184.0,90.0 176.3,77.0 173.2,69.4" fill="#184ad2" stroke="#184ad2" stroke-width="1.2" stroke-linejoin="round"/><polygon points="168.6,90.0 173.2,84.7 176.3,78.6 184.0,90.0 187.0,90.0 184.0,90.0 187.0,92.7 187.0,100.3 184.0,108.0 179.4,114.1 174.8,111.1 167.1,106.5 164.0,103.4 167.9,98.8 170.2,91.1 171.7,90.0 167.1,90.0" fill="#a24e1c" stroke="#a24e1c" stroke-width="1.2" stroke-linejoin="round"/><polygon points="214.6,90.0 216.1,87.8 219.2,78.6 222.3,84.7 222.3,90.0 225.3,90.0 225.3,91.1 226.1,98.8 225.3,106.5 227.6,115.7 226.9,124.8 222.3,135.6 216.1,134.0 210.0,132.5 205.4,135.6 197.8,140.2 191.6,134.0 190.1,129.4 194.7,120.2 200.8,118.7 207.0,115.7 208.5,108.0 210.0,98.8 213.1,91.1 214.6,90.0" fill="#b43cae" stroke="#b43cae" stroke-width="1.2" stroke-linejoin="round"/><polygon points="218.0,77.0 220.4,78.3 222.6,86.2 220.7,87.8" fill="#2cc040" stroke="#2cc040" stroke-width="1.2" stroke-linejoin="round"/><polygon points="225.3,106.5 227.6,115.7 226.9,124.8 222.3,135.6 216.1,141.7 210.0,144.0 213.1,140.2 220.7,132.5 224.6,123.3 225.0,114.1" fill="#9c1636" stroke="#9c1636" stroke-width="1.2" stroke-linejoin="round"/><polygon points="197.8,140.2 205.4,135.6 210.0,133.3 216.1,134.8 213.1,140.2 208.5,144.0 203.9,146.3 198.5,144.8 196.2,142.5" fill="#96de50" stroke="#96de50" stroke-width="1.2" stroke-linejoin="round"/><polygon points="174.8,115.7 179.4,114.1 184.0,108.0 187.0,100.3 191.6,100.3 193.2,108.0 194.7,117.2 191.6,124.8 187.0,130.2 182.4,128.7 182.4,121.8 179.4,117.2" fill="#dcd43c" stroke="#dcd43c" stroke-width="1.2" stroke-linejoin="round"/><polygon points="182.4,135.6 188.6,133.7 194.7,142.0 188.6,142.5 184.0,140.2" fill="#dcd43c" stroke="#dcd43c" stroke-width="1.2" stroke-linejoin="round"/><polygon points="77.0,135.6 81.6,131.0 87.8,127.9 93.9,131.0 100.0,127.9 103.1,121.8 106.1,117.2 110.7,118.7 112.3,124.8 118.4,129.4 120.0,127.9 120.0,146.3 119.9,146.3 118.4,152.4 113.8,155.5 106.1,152.4 97.0,147.8 90.8,146.3 84.7,143.2 78.6,140.2" fill="#b44040" stroke="#b44040" stroke-width="1.2" stroke-linejoin="round"/><polygon points="120.0,127.9 121.1,129.4 127.3,123.6 133.4,121.5 141.1,119.3 147.2,120.6 151.8,123.3 159.4,124.8 167.1,126.4 176.3,128.2 184.0,129.8 188.6,134.0 185.5,138.6 176.3,141.7 170.2,141.7 165.6,137.1 157.9,135.6 151.8,135.6 150.2,141.7 145.7,144.8 139.5,143.2 138.0,137.1 133.4,141.7 124.2,144.8 120.0,144.0" fill="#b44040" stroke="#b44040" stroke-width="1.2" stroke-linejoin="round"/><polygon points="138.0,137.1 140.3,137.9 139.5,143.2 137.7,142.0" fill="#18a8a0" stroke="#18a8a0" stroke-width="1.2" stroke-linejoin="round"/><polygon points="153.3,136.3 165.6,137.4 167.9,140.2 161.0,138.6 154.1,138.9" fill="#18a8a0" stroke="#18a8a0" stroke-width="1.2" stroke-linejoin="round"/><polygon points="110.7,118.7 115.3,115.7 120.0,114.1 120.0,127.9 118.4,129.4 112.3,124.8" fill="#d8d23c" stroke="#d8d23c" stroke-width="1.2" stroke-linejoin="round"/><polygon points="120.0,114.1 120.0,115.7 121.1,120.2 125.7,123.3 121.1,129.4 120.0,127.9" fill="#d8d23c" stroke="#d8d23c" stroke-width="1.2" stroke-linejoin="round"/><polygon points="120.0,101.9 124.2,100.3 136.5,98.8 145.7,98.8 151.8,100.3 156.4,104.9 162.5,108.0 167.1,106.5 174.8,111.1 179.4,115.7 182.4,121.8 182.4,128.2 176.3,128.5 170.2,127.6 164.0,126.1 157.9,124.8 151.8,123.6 145.7,120.9 141.1,119.6 138.0,120.2 131.9,121.8 125.7,124.2 121.1,121.8 120.0,115.7 120.0,114.1" fill="#dc3edc" stroke="#dc3edc" stroke-width="1.2" stroke-linejoin="round"/><polygon points="120.0,101.9 120.0,114.1 118.4,112.6 112.3,115.7 106.1,117.2 103.1,121.8 100.0,127.9 93.9,131.0 87.8,127.9 81.6,131.0 77.0,135.6 72.4,132.5 70.9,126.4 72.4,121.0 77.0,115.7 80.1,111.1 84.7,106.5 90.8,103.4 97.0,104.9 103.1,108.0 109.2,106.5 115.3,103.4" fill="#dc3edc" stroke="#dc3edc" stroke-width="1.2" stroke-linejoin="round"/><polygon points="63.2,127.9 67.8,124.1 72.4,121.0 77.0,115.7 80.1,114.9 77.0,120.2 71.7,126.4 72.4,132.5 66.3,132.8 62.9,131.0" fill="#40be3c" stroke="#40be3c" stroke-width="1.2" stroke-linejoin="round"/><polygon points="151.0,99.6 156.4,99.1 160.2,103.4 157.9,105.7 154.8,104.2" fill="#28a82c" stroke="#28a82c" stroke-width="1.2" stroke-linejoin="round"/><polygon points="74.0,107.2 78.6,101.9 84.7,102.6 87.8,104.9 81.6,109.5 77.0,114.1 74.7,111.8" fill="#eea2a0" stroke="#eea2a0" stroke-width="1.2" stroke-linejoin="round"/></g></g><g filter="url(#bl)" fill="none" stroke="#101018" stroke-linecap="round" stroke-linejoin="round"><path d="M49.4 44.1 L54.0 49.4 L57.9 46.1 L66.3 39.9 L77.0 37.5 L84.7 38.0 L88.5 34.4 L97.0 30.7 L109.2 29.5" stroke-width="2.0" stroke-opacity="0.294"/><path d="M56.3 50.2 L66.3 51.0 L70.9 45.2 L77.0 43.6 L78.9 48.7 L77.0 55.6 L72.4 60.5" stroke-width="1.875" stroke-opacity="0.294"/><path d="M35.7 66.6 L44.8 63.2 L54.0 61.1 L63.2 58.9 L71.2 62.0" stroke-width="1.75" stroke-opacity="0.24499999999999997"/><path d="M90.8 40.6 L97.0 45.2 L104.6 48.2 L110.7 51.0" stroke-width="1.75" stroke-opacity="0.24499999999999997"/><path d="M21.9 55.9 L29.5 54.3 L34.1 58.9" stroke-width="1.625" stroke-opacity="0.21"/><path d="M18.8 66.6 L28.0 65.1 L32.0 68.1" stroke-width="1.625" stroke-opacity="0.21"/><path d="M28.0 43.6 L35.7 46.7" stroke-width="1.625" stroke-opacity="0.21"/><path d="M58.6 66.3 L57.1 72.4 L55.9 80.1 L58.6 85.0" stroke-width="1.625" stroke-opacity="0.22399999999999998"/><path d="M74.3 72.4 L77.0 78.6 L75.5 84.7 L76.7 93.9" stroke-width="1.75" stroke-opacity="0.24499999999999997"/><path d="M93.1 77.0 L93.9 84.7 L93.6 94.7" stroke-width="1.875" stroke-opacity="0.27999999999999997"/><path d="M108.0 58.6 L103.1 63.5 L100.0 69.7 L95.7 77.0" stroke-width="1.875" stroke-opacity="0.27999999999999997"/><path d="M51.0 30.3 L52.8 36.4" stroke-width="1.625" stroke-opacity="0.21"/><path d="M62.9 25.7 L64.0 32.3" stroke-width="1.625" stroke-opacity="0.21"/><path d="M73.7 22.2 L74.7 29.2" stroke-width="1.625" stroke-opacity="0.21"/><path d="M83.5 20.9 L84.1 27.4" stroke-width="1.625" stroke-opacity="0.21"/><path d="M94.7 20.0 L95.1 25.7" stroke-width="1.625" stroke-opacity="0.21"/><path d="M105.4 18.5 L105.5 23.7" stroke-width="1.625" stroke-opacity="0.21"/><path d="M118.4 43.3 L115.3 55.6 L112.3 66.3 L110.7 77.0" stroke-width="1.625" stroke-opacity="0.196"/><path d="M28.0 72.4 L34.1 77.0 L38.0 84.7 L40.2 92.4" stroke-width="1.625" stroke-opacity="0.21"/><path d="M34.9 49.4 L38.7 54.3 L45.2 55.9 L51.0 51.3" stroke-width="1.75" stroke-opacity="0.24499999999999997"/><path d="M159.4 25.2 L157.9 32.9 L151.8 39.0 L145.7 42.1 L139.5 46.7 L134.9 51.3 L133.4 55.9 L128.8 62.0 L124.2 65.1 L121.1 71.2 L118.1 78.9" stroke-width="2.0" stroke-opacity="0.294"/><path d="M179.4 31.4 L177.8 36.0 L173.2 39.0 L170.2 43.6 L167.1 48.2 L161.0 49.8 L154.8 51.3 L150.2 54.3 L145.7 62.0 L141.1 66.6 L134.9 69.7" stroke-width="2.0" stroke-opacity="0.294"/><path d="M173.2 62.0 L173.5 69.7 L176.3 77.3 L173.2 85.0" stroke-width="1.875" stroke-opacity="0.27999999999999997"/><path d="M182.4 60.5 L183.4 66.6 L188.6 69.7 L194.7 71.2 L197.8 75.8 L205.4 72.7 L210.0 77.3" stroke-width="1.875" stroke-opacity="0.26599999999999996"/><path d="M131.9 29.8 L134.9 37.5 L141.1 40.6" stroke-width="1.625" stroke-opacity="0.21"/><path d="M187.0 43.3 L194.7 49.4 L197.8 57.1 L203.9 60.2" stroke-width="1.625" stroke-opacity="0.175"/><path d="M191.6 63.2 L200.8 66.3 L207.0 69.4" stroke-width="1.625" stroke-opacity="0.175"/><path d="M153.3 55.6 L151.8 66.3 L154.8 77.0 L153.3 87.8" stroke-width="1.75" stroke-opacity="0.21"/><path d="M187.0 72.4 L191.6 81.6 L197.8 87.8" stroke-width="1.75" stroke-opacity="0.22399999999999998"/><path d="M127.3 39.0 L125.7 43.6 L119.6 42.1" stroke-width="1.75" stroke-opacity="0.24499999999999997"/><path d="M134.9 69.7 L134.2 77.0 L136.5 84.7 L138.0 90.8" stroke-width="1.875" stroke-opacity="0.27999999999999997"/><path d="M20.3 91.1 L28.0 95.7 L35.7 101.9 L41.8 108.0" stroke-width="1.625" stroke-opacity="0.196"/><path d="M32.6 89.6 L40.2 94.2 L43.3 100.3" stroke-width="1.625" stroke-opacity="0.196"/><path d="M51.0 91.1 L57.1 97.6 L59.6 101.6 L62.0 105.8 L72.4 105.2" stroke-width="1.75" stroke-opacity="0.26599999999999996"/><path d="M74.7 111.8 L78.6 108.0 L84.7 105.2 L90.8 103.1 L97.0 104.6 L103.1 107.7 L109.2 106.1 L115.3 103.1 L125.0 101.6" stroke-width="2.25" stroke-opacity="0.35"/><path d="M77.0 135.9 L81.6 131.3 L87.8 128.2 L93.9 131.3 L100.0 128.2 L103.1 122.1 L106.1 117.5" stroke-width="1.875" stroke-opacity="0.294"/><path d="M78.6 140.5 L84.7 143.5 L90.8 146.6 L97.0 148.1 L106.1 152.7 L113.8 155.8 L118.4 152.7 L119.9 146.6" stroke-width="1.875" stroke-opacity="0.27999999999999997"/><path d="M90.8 135.6 L100.0 138.6 L109.2 143.2 L115.3 146.3" stroke-width="1.625" stroke-opacity="0.196"/><path d="M84.7 112.6 L90.8 115.7 L97.0 114.1 L103.1 115.7" stroke-width="1.625" stroke-opacity="0.196"/><path d="M78.6 91.1 L80.1 97.3 L77.0 101.9" stroke-width="1.75" stroke-opacity="0.26599999999999996"/><path d="M94.7 91.1 L97.0 97.3 L93.9 100.3" stroke-width="1.75" stroke-opacity="0.26599999999999996"/><path d="M115.0 101.6 L124.2 100.0 L136.5 98.5 L145.7 98.5 L151.8 100.0 L156.4 104.6 L162.5 107.7" stroke-width="2.25" stroke-opacity="0.35"/><path d="M115.0 128.2 L121.1 129.8 L127.3 123.9 L133.4 121.8 L141.1 119.6 L147.2 120.9 L151.8 123.6 L159.4 125.2 L167.1 126.7 L176.3 128.5 L182.4 128.5" stroke-width="2.0" stroke-opacity="0.315"/><path d="M115.0 144.2 L124.2 145.1 L133.4 142.0 L138.0 137.4 L139.5 143.5 L145.7 145.1 L150.2 142.0 L151.8 135.9 L157.9 135.9 L165.6 137.4 L170.2 142.0 L176.3 142.0 L185.5 138.9 L188.6 134.3" stroke-width="1.875" stroke-opacity="0.27999999999999997"/><path d="M145.7 123.3 L150.2 131.0 L151.8 135.6" stroke-width="1.625" stroke-opacity="0.21"/><path d="M214.6 85.3 L213.1 91.4 L210.0 99.1 L208.5 108.3 L207.0 116.0 L200.8 119.0 L194.7 120.6" stroke-width="1.875" stroke-opacity="0.27999999999999997"/><path d="M194.7 124.8 L203.9 123.3 L213.1 120.2 L222.3 115.7" stroke-width="1.625" stroke-opacity="0.21"/><path d="M197.8 132.5 L207.0 129.4 L216.1 127.9" stroke-width="1.625" stroke-opacity="0.21"/><path d="M131.9 94.5 L133.4 97.6 L139.5 96.0 L148.7 99.1 L154.8 97.6 L161.0 102.2 L167.1 99.1" stroke-width="1.875" stroke-opacity="0.27999999999999997"/><path d="M194.7 94.2 L200.8 100.3 L197.8 108.0 L203.9 112.6" stroke-width="1.75" stroke-opacity="0.22399999999999998"/><path d="M124.2 108.0 L133.4 109.5 L138.0 112.6" stroke-width="1.625" stroke-opacity="0.196"/><path d="M154.8 111.1 L164.0 115.7 L173.2 120.2" stroke-width="1.625" stroke-opacity="0.196"/><path d="M171.7 85.3 L170.2 91.1 L167.1 98.8" stroke-width="1.75" stroke-opacity="0.26599999999999996"/><path d="M184.0 85.3 L187.0 92.7 L187.0 100.3 L184.0 108.0 L179.4 114.1" stroke-width="1.75" stroke-opacity="0.26599999999999996"/><path d="M191.6 100.3 L193.2 108.0 L194.7 117.2 L191.6 124.8 L187.0 130.2" stroke-width="1.75" stroke-opacity="0.24499999999999997"/></g><path d="M14.2 90.0 L12.7 84.7 L11.9 74.0 L15.7 63.2 L16.5 58.6 L21.1 51.0 L26.5 41.8 L32.6 38.7 L40.2 34.1 L51.0 28.0 L63.2 23.4 L77.0 20.3 L90.8 19.6 L103.1 18.0 L112.3 17.3 L120.0 19.6 L124.2 20.3 L136.5 21.1 L144.1 21.9 L153.3 20.3 L161.0 24.9 L167.1 24.2 L176.3 27.2 L184.0 33.4 L186.3 37.2 L191.6 38.0 L199.3 41.8 L203.9 49.4 L205.4 55.6 L210.0 58.6 L214.6 66.3 L213.1 70.9 L219.2 77.0 L222.3 84.7 L222.3 90.0 L225.3 90.0 L225.3 91.1 L226.1 98.8 L225.3 106.5 L227.6 115.7 L226.9 124.8 L222.3 135.6 L216.1 141.7 L210.0 144.0 L207.0 143.2 L203.9 146.3 L198.5 144.8 L194.7 141.7 L188.6 142.5 L182.4 144.0 L176.3 146.3 L167.1 145.5 L161.0 149.4 L153.3 150.9 L142.6 152.4 L134.9 152.4 L127.3 154.0 L121.1 157.0 L120.0 160.1 L115.3 160.9 L109.2 160.1 L103.1 157.8 L97.0 155.5 L90.8 152.4 L83.2 151.7 L77.0 149.4 L69.4 144.8 L64.0 138.6 L61.7 132.5 L63.2 127.9 L67.8 124.1 L72.4 121.0 L75.5 117.2 L74.0 116.4 L66.3 117.2 L57.1 114.9 L49.4 114.1 L41.8 112.6 L34.1 108.0 L28.0 105.7 L21.9 100.3 L16.5 94.2 L14.2 90.0Z" fill="none" stroke="#201828" stroke-opacity="0.5" stroke-width="5" filter="url(#b2)"/></g></g></svg>
<div style="left:251.7px;top:352px;width:544px;height:1px;background:#b4b4b4;"></div>
<div style="left:251.6px;top:354.7px;width:181.2px;height:4.2px;background:#f1462f;"></div>
<div class="t" style="left:253.70px;top:361.86px;font-size:5.15px;transform:scaleX(0.884);transform-origin:0 0;">Or:</div>
<div class="dd" style="left:264.4px;top:359.5px;width:74.6px;height:11.5px;"></div>
<div class="t" style="left:270.7px;top:363.15px;width:50px;text-align:center;font-size:5.15px;">Axial</div>
<div class="ind" style="left:329.1px;top:364.15px;"></div>
<svg style="left:340.0px;top:359.6px;" width="7.4" height="11.4" viewBox="0 0 7.4 11.4"><rect x="0" y="0" width="7.4" height="5.7" fill="#fafafa"/><path d="M0 5.25H7.4M6.95 0V5.7" stroke="#a6a6a6" stroke-width="0.9" fill="none"/><path d="M0 0.3H6.5M0.3 0V4.8" stroke="#e9e9e9" stroke-width="0.6" fill="none"/><rect x="0" y="5.7" width="7.4" height="5.7" fill="#fafafa"/><path d="M0 10.950000000000001H7.4M6.95 5.7V11.4" stroke="#a6a6a6" stroke-width="0.9" fill="none"/><path d="M0 6.0H6.5M0.3 5.7V10.5" stroke="#e9e9e9" stroke-width="0.6" fill="none"/><path d="M1.1 4.2L3.6 1.5L6.1 4.2Z" fill="#0a0a0a"/><path d="M1.1 7.300000000000001L3.6 9.8L6.1 7.300000000000001Z" fill="#0a0a0a"/></svg>
<div class="t" style="left:350.90px;top:361.86px;font-size:5.15px;transform:scaleX(0.772);transform-origin:0 0;">Fg:</div>
<div class="dd" style="left:361.0px;top:359.5px;width:62.4px;height:11.5px;"></div>
<div class="t" style="left:361.2px;top:363.15px;width:50px;text-align:center;font-size:5.15px;">None</div>
<div class="ind" style="left:413.5px;top:364.15px;"></div>
<svg style="left:425.1px;top:359.6px;" width="7.4" height="11.4" viewBox="0 0 7.4 11.4"><rect x="0" y="0" width="7.4" height="5.7" fill="#fafafa"/><path d="M0 5.25H7.4M6.95 0V5.7" stroke="#a6a6a6" stroke-width="0.9" fill="none"/><path d="M0 0.3H6.5M0.3 0V4.8" stroke="#e9e9e9" stroke-width="0.6" fill="none"/><rect x="0" y="5.7" width="7.4" height="5.7" fill="#fafafa"/><path d="M0 10.950000000000001H7.4M6.95 5.7V11.4" stroke="#a6a6a6" stroke-width="0.9" fill="none"/><path d="M0 6.0H6.5M0.3 5.7V10.5" stroke="#e9e9e9" stroke-width="0.6" fill="none"/><path d="M1.1 4.2L3.6 1.5L6.1 4.2Z" fill="#0a0a0a"/><path d="M1.1 7.300000000000001L3.6 9.8L6.1 7.300000000000001Z" fill="#0a0a0a"/></svg>
<div class="t" style="left:253.70px;top:373.86px;font-size:5.15px;transform:scaleX(0.883);transform-origin:0 0;">Lb:</div>
<div class="dd" style="left:264.4px;top:371.5px;width:74.6px;height:11.5px;"></div>
<div class="t" style="left:270.7px;top:375.15px;width:50px;text-align:center;font-size:5.15px;">None</div>
<div class="ind" style="left:329.1px;top:376.15px;"></div>
<svg style="left:340.0px;top:371.6px;" width="7.4" height="11.4" viewBox="0 0 7.4 11.4"><rect x="0" y="0" width="7.4" height="5.7" fill="#fafafa"/><path d="M0 5.25H7.4M6.95 0V5.7" stroke="#a6a6a6" stroke-width="0.9" fill="none"/><path d="M0 0.3H6.5M0.3 0V4.8" stroke="#e9e9e9" stroke-width="0.6" fill="none"/><rect x="0" y="5.7" width="7.4" height="5.7" fill="#fafafa"/><path d="M0 10.950000000000001H7.4M6.95 5.7V11.4" stroke="#a6a6a6" stroke-width="0.9" fill="none"/><path d="M0 6.0H6.5M0.3 5.7V10.5" stroke="#e9e9e9" stroke-width="0.6" fill="none"/><path d="M1.1 4.2L3.6 1.5L6.1 4.2Z" fill="#0a0a0a"/><path d="M1.1 7.300000000000001L3.6 9.8L6.1 7.300000000000001Z" fill="#0a0a0a"/></svg>
<div class="t" style="left:350.90px;top:373.86px;font-size:5.15px;transform:scaleX(0.807);transform-origin:0 0;">Bg:</div>
<div class="dd" style="left:361.0px;top:371.5px;width:62.4px;height:11.5px;"></div>
<div class="t" style="left:361.2px;top:375.15px;width:50px;text-align:center;font-size:5.15px;">None</div>
<div class="ind" style="left:413.5px;top:376.15px;"></div>
<svg style="left:425.1px;top:371.6px;" width="7.4" height="11.4" viewBox="0 0 7.4 11.4"><rect x="0" y="0" width="7.4" height="5.7" fill="#fafafa"/><path d="M0 5.25H7.4M6.95 0V5.7" stroke="#a6a6a6" stroke-width="0.9" fill="none"/><path d="M0 0.3H6.5M0.3 0V4.8" stroke="#e9e9e9" stroke-width="0.6" fill="none"/><rect x="0" y="5.7" width="7.4" height="5.7" fill="#fafafa"/><path d="M0 10.950000000000001H7.4M6.95 5.7V11.4" stroke="#a6a6a6" stroke-width="0.9" fill="none"/><path d="M0 6.0H6.5M0.3 5.7V10.5" stroke="#e9e9e9" stroke-width="0.6" fill="none"/><path d="M1.1 4.2L3.6 1.5L6.1 4.2Z" fill="#0a0a0a"/><path d="M1.1 7.300000000000001L3.6 9.8L6.1 7.300000000000001Z" fill="#0a0a0a"/></svg>
<div class="btn" style="left:253.0px;top:384.2px;width:12.8px;height:12.6px;border-color:#4a4a4a #747474 #747474 #4a4a4a;border-radius:0.8px;"></div>
<svg style="left:254.79999999999998px;top:386.4px;" width="9.6" height="8" viewBox="0 0 9.6 8"><path d="M1 4.2 Q4.8 -0.6 8.6 4.2" fill="none" stroke="#aaa" stroke-width="0.7"/><path d="M0.6 3.4 Q4.8 9.4 9 3.4" fill="none" stroke="#2a2a2a" stroke-width="1"/></svg>
<div class="trough" style="left:268.0px;top:384.8px;width:135px;height:10.6px;"></div>
<div class="thumb" style="left:326.8px;top:386.2px;width:17.8px;height:8.2px;"><i></i></div>
<div class="ent" style="left:405.4px;top:384.2px;width:27.2px;height:12.6px;"></div>
<div class="t" style="left:407.2px;top:387.9px;-webkit-text-stroke:0.1px #111;font-size:5.15px;">0</div>
<div style="left:432.9px;top:354.7px;width:181.2px;height:4.2px;background:#ead345;"></div>
<div class="t" style="left:435.00px;top:361.86px;font-size:5.15px;transform:scaleX(0.884);transform-origin:0 0;">Or:</div>
<div class="dd" style="left:445.7px;top:359.5px;width:74.6px;height:11.5px;"></div>
<div class="t" style="left:452.0px;top:363.15px;width:50px;text-align:center;font-size:5.15px;">Sagittal</div>
<div class="ind" style="left:510.4px;top:364.15px;"></div>
<svg style="left:521.3px;top:359.6px;" width="7.4" height="11.4" viewBox="0 0 7.4 11.4"><rect x="0" y="0" width="7.4" height="5.7" fill="#fafafa"/><path d="M0 5.25H7.4M6.95 0V5.7" stroke="#a6a6a6" stroke-width="0.9" fill="none"/><path d="M0 0.3H6.5M0.3 0V4.8" stroke="#e9e9e9" stroke-width="0.6" fill="none"/><rect x="0" y="5.7" width="7.4" height="5.7" fill="#fafafa"/><path d="M0 10.950000000000001H7.4M6.95 5.7V11.4" stroke="#a6a6a6" stroke-width="0.9" fill="none"/><path d="M0 6.0H6.5M0.3 5.7V10.5" stroke="#e9e9e9" stroke-width="0.6" fill="none"/><path d="M1.1 4.2L3.6 1.5L6.1 4.2Z" fill="#0a0a0a"/><path d="M1.1 7.300000000000001L3.6 9.8L6.1 7.300000000000001Z" fill="#0a0a0a"/></svg>
<div class="t" style="left:532.20px;top:361.86px;font-size:5.15px;transform:scaleX(0.772);transform-origin:0 0;">Fg:</div>
<div class="dd" style="left:542.3px;top:359.5px;width:62.4px;height:11.5px;"></div>
<div class="t" style="left:542.5px;top:363.15px;width:50px;text-align:center;font-size:5.15px;">None</div>
<div class="ind" style="left:594.8px;top:364.15px;"></div>
<svg style="left:606.4px;top:359.6px;" width="7.4" height="11.4" viewBox="0 0 7.4 11.4"><rect x="0" y="0" width="7.4" height="5.7" fill="#fafafa"/><path d="M0 5.25H7.4M6.95 0V5.7" stroke="#a6a6a6" stroke-width="0.9" fill="none"/><path d="M0 0.3H6.5M0.3 0V4.8" stroke="#e9e9e9" stroke-width="0.6" fill="none"/><rect x="0" y="5.7" width="7.4" height="5.7" fill="#fafafa"/><path d="M0 10.950000000000001H7.4M6.95 5.7V11.4" stroke="#a6a6a6" stroke-width="0.9" fill="none"/><path d="M0 6.0H6.5M0.3 5.7V10.5" stroke="#e9e9e9" stroke-width="0.6" fill="none"/><path d="M1.1 4.2L3.6 1.5L6.1 4.2Z" fill="#0a0a0a"/><path d="M1.1 7.300000000000001L3.6 9.8L6.1 7.300000000000001Z" fill="#0a0a0a"/></svg>
<div class="t" style="left:435.00px;top:373.86px;font-size:5.15px;transform:scaleX(0.883);transform-origin:0 0;">Lb:</div>
<div class="dd" style="left:445.7px;top:371.5px;width:74.6px;height:11.5px;"></div>
<div class="t" style="left:452.0px;top:375.15px;width:50px;text-align:center;font-size:5.15px;">None</div>
<div class="ind" style="left:510.4px;top:376.15px;"></div>
<svg style="left:521.3px;top:371.6px;" width="7.4" height="11.4" viewBox="0 0 7.4 11.4"><rect x="0" y="0" width="7.4" height="5.7" fill="#fafafa"/><path d="M0 5.25H7.4M6.95 0V5.7" stroke="#a6a6a6" stroke-width="0.9" fill="none"/><path d="M0 0.3H6.5M0.3 0V4.8" stroke="#e9e9e9" stroke-width="0.6" fill="none"/><rect x="0" y="5.7" width="7.4" height="5.7" fill="#fafafa"/><path d="M0 10.950000000000001H7.4M6.95 5.7V11.4" stroke="#a6a6a6" stroke-width="0.9" fill="none"/><path d="M0 6.0H6.5M0.3 5.7V10.5" stroke="#e9e9e9" stroke-width="0.6" fill="none"/><path d="M1.1 4.2L3.6 1.5L6.1 4.2Z" fill="#0a0a0a"/><path d="M1.1 7.300000000000001L3.6 9.8L6.1 7.300000000000001Z" fill="#0a0a0a"/></svg>
<div class="t" style="left:532.20px;top:373.86px;font-size:5.15px;transform:scaleX(0.807);transform-origin:0 0;">Bg:</div>
<div class="dd" style="left:542.3px;top:371.5px;width:62.4px;height:11.5px;"></div>
<div class="t" style="left:542.5px;top:375.15px;width:50px;text-align:center;font-size:5.15px;">None</div>
<div class="ind" style="left:594.8px;top:376.15px;"></div>
<svg style="left:606.4px;top:371.6px;" width="7.4" height="11.4" viewBox="0 0 7.4 11.4"><rect x="0" y="0" width="7.4" height="5.7" fill="#fafafa"/><path d="M0 5.25H7.4M6.95 0V5.7" stroke="#a6a6a6" stroke-width="0.9" fill="none"/><path d="M0 0.3H6.5M0.3 0V4.8" stroke="#e9e9e9" stroke-width="0.6" fill="none"/><rect x="0" y="5.7" width="7.4" height="5.7" fill="#fafafa"/><path d="M0 10.950000000000001H7.4M6.95 5.7V11.4" stroke="#a6a6a6" stroke-width="0.9" fill="none"/><path d="M0 6.0H6.5M0.3 5.7V10.5" stroke="#e9e9e9" stroke-width="0.6" fill="none"/><path d="M1.1 4.2L3.6 1.5L6.1 4.2Z" fill="#0a0a0a"/><path d="M1.1 7.300000000000001L3.6 9.8L6.1 7.300000000000001Z" fill="#0a0a0a"/></svg>
<div class="btn" style="left:434.29999999999995px;top:384.2px;width:12.8px;height:12.6px;border-color:#4a4a4a #747474 #747474 #4a4a4a;border-radius:0.8px;"></div>
<svg style="left:436.09999999999997px;top:386.4px;" width="9.6" height="8" viewBox="0 0 9.6 8"><path d="M1 4.2 Q4.8 -0.6 8.6 4.2" fill="none" stroke="#aaa" stroke-width="0.7"/><path d="M0.6 3.4 Q4.8 9.4 9 3.4" fill="none" stroke="#2a2a2a" stroke-width="1"/></svg>
<div class="trough" style="left:449.29999999999995px;top:384.8px;width:135px;height:10.6px;"></div>
<div class="thumb" style="left:508.09999999999997px;top:386.2px;width:17.8px;height:8.2px;"><i></i></div>
<div class="ent" style="left:586.7px;top:384.2px;width:27.2px;height:12.6px;"></div>
<div class="t" style="left:588.5px;top:387.9px;-webkit-text-stroke:0.1px #111;font-size:5.15px;">0</div>
<div style="left:614.3px;top:354.7px;width:181.2px;height:4.2px;background:#68ac44;"></div>
<div class="t" style="left:616.40px;top:361.86px;font-size:5.15px;transform:scaleX(0.884);transform-origin:0 0;">Or:</div>
<div class="dd" style="left:627.0999999999999px;top:359.5px;width:74.6px;height:11.5px;"></div>
<div class="t" style="left:633.3999999999999px;top:363.15px;width:50px;text-align:center;font-size:5.15px;">Coronal</div>
<div class="ind" style="left:691.8px;top:364.15px;"></div>
<svg style="left:702.6999999999999px;top:359.6px;" width="7.4" height="11.4" viewBox="0 0 7.4 11.4"><rect x="0" y="0" width="7.4" height="5.7" fill="#fafafa"/><path d="M0 5.25H7.4M6.95 0V5.7" stroke="#a6a6a6" stroke-width="0.9" fill="none"/><path d="M0 0.3H6.5M0.3 0V4.8" stroke="#e9e9e9" stroke-width="0.6" fill="none"/><rect x="0" y="5.7" width="7.4" height="5.7" fill="#fafafa"/><path d="M0 10.950000000000001H7.4M6.95 5.7V11.4" stroke="#a6a6a6" stroke-width="0.9" fill="none"/><path d="M0 6.0H6.5M0.3 5.7V10.5" stroke="#e9e9e9" stroke-width="0.6" fill="none"/><path d="M1.1 4.2L3.6 1.5L6.1 4.2Z" fill="#0a0a0a"/><path d="M1.1 7.300000000000001L3.6 9.8L6.1 7.300000000000001Z" fill="#0a0a0a"/></svg>
<div class="t" style="left:713.60px;top:361.86px;font-size:5.15px;transform:scaleX(0.772);transform-origin:0 0;">Fg:</div>
<div class="dd" style="left:723.6999999999999px;top:359.5px;width:62.4px;height:11.5px;"></div>
<div class="t" style="left:723.9px;top:363.15px;width:50px;text-align:center;font-size:5.15px;">None</div>
<div class="ind" style="left:776.1999999999999px;top:364.15px;"></div>
<svg style="left:787.8px;top:359.6px;" width="7.4" height="11.4" viewBox="0 0 7.4 11.4"><rect x="0" y="0" width="7.4" height="5.7" fill="#fafafa"/><path d="M0 5.25H7.4M6.95 0V5.7" stroke="#a6a6a6" stroke-width="0.9" fill="none"/><path d="M0 0.3H6.5M0.3 0V4.8" stroke="#e9e9e9" stroke-width="0.6" fill="none"/><rect x="0" y="5.7" width="7.4" height="5.7" fill="#fafafa"/><path d="M0 10.950000000000001H7.4M6.95 5.7V11.4" stroke="#a6a6a6" stroke-width="0.9" fill="none"/><path d="M0 6.0H6.5M0.3 5.7V10.5" stroke="#e9e9e9" stroke-width="0.6" fill="none"/><path d="M1.1 4.2L3.6 1.5L6.1 4.2Z" fill="#0a0a0a"/><path d="M1.1 7.300000000000001L3.6 9.8L6.1 7.300000000000001Z" fill="#0a0a0a"/></svg>
<div class="t" style="left:616.40px;top:373.86px;font-size:5.15px;transform:scaleX(0.883);transform-origin:0 0;">Lb:</div>
<div class="dd" style="left:627.0999999999999px;top:371.5px;width:74.6px;height:11.5px;"></div>
<div class="t" style="left:633.3999999999999px;top:375.15px;width:50px;text-align:center;font-size:5.15px;">None</div>
<div class="ind" style="left:691.8px;top:376.15px;"></div>
<svg style="left:702.6999999999999px;top:371.6px;" width="7.4" height="11.4" viewBox="0 0 7.4 11.4"><rect x="0" y="0" width="7.4" height="5.7" fill="#fafafa"/><path d="M0 5.25H7.4M6.95 0V5.7" stroke="#a6a6a6" stroke-width="0.9" fill="none"/><path d="M0 0.3H6.5M0.3 0V4.8" stroke="#e9e9e9" stroke-width="0.6" fill="none"/><rect x="0" y="5.7" width="7.4" height="5.7" fill="#fafafa"/><path d="M0 10.950000000000001H7.4M6.95 5.7V11.4" stroke="#a6a6a6" stroke-width="0.9" fill="none"/><path d="M0 6.0H6.5M0.3 5.7V10.5" stroke="#e9e9e9" stroke-width="0.6" fill="none"/><path d="M1.1 4.2L3.6 1.5L6.1 4.2Z" fill="#0a0a0a"/><path d="M1.1 7.300000000000001L3.6 9.8L6.1 7.300000000000001Z" fill="#0a0a0a"/></svg>
<div class="t" style="left:713.60px;top:373.86px;font-size:5.15px;transform:scaleX(0.807);transform-origin:0 0;">Bg:</div>
<div class="dd" style="left:723.6999999999999px;top:371.5px;width:62.4px;height:11.5px;"></div>
<div class="t" style="left:723.9px;top:375.15px;width:50px;text-align:center;font-size:5.15px;">None</div>
<div class="ind" style="left:776.1999999999999px;top:376.15px;"></div>
<svg style="left:787.8px;top:371.6px;" width="7.4" height="11.4" viewBox="0 0 7.4 11.4"><rect x="0" y="0" width="7.4" height="5.7" fill="#fafafa"/><path d="M0 5.25H7.4M6.95 0V5.7" stroke="#a6a6a6" stroke-width="0.9" fill="none"/><path d="M0 0.3H6.5M0.3 0V4.8" stroke="#e9e9e9" stroke-width="0.6" fill="none"/><rect x="0" y="5.7" width="7.4" height="5.7" fill="#fafafa"/><path d="M0 10.950000000000001H7.4M6.95 5.7V11.4" stroke="#a6a6a6" stroke-width="0.9" fill="none"/><path d="M0 6.0H6.5M0.3 5.7V10.5" stroke="#e9e9e9" stroke-width="0.6" fill="none"/><path d="M1.1 4.2L3.6 1.5L6.1 4.2Z" fill="#0a0a0a"/><path d="M1.1 7.300000000000001L3.6 9.8L6.1 7.300000000000001Z" fill="#0a0a0a"/></svg>
<div class="btn" style="left:615.6999999999999px;top:384.2px;width:12.8px;height:12.6px;border-color:#4a4a4a #747474 #747474 #4a4a4a;border-radius:0.8px;"></div>
<svg style="left:617.5px;top:386.4px;" width="9.6" height="8" viewBox="0 0 9.6 8"><path d="M1 4.2 Q4.8 -0.6 8.6 4.2" fill="none" stroke="#aaa" stroke-width="0.7"/><path d="M0.6 3.4 Q4.8 9.4 9 3.4" fill="none" stroke="#2a2a2a" stroke-width="1"/></svg>
<div class="trough" style="left:630.6999999999999px;top:384.8px;width:135px;height:10.6px;"></div>
<div class="thumb" style="left:689.5px;top:386.2px;width:17.8px;height:8.2px;"><i></i></div>
<div class="ent" style="left:768.0999999999999px;top:384.2px;width:27.2px;height:12.6px;"></div>
<div class="t" style="left:769.9px;top:387.9px;-webkit-text-stroke:0.1px #111;font-size:5.15px;">0</div>
<div style="left:251.9px;top:398.7px;width:543.2px;height:167.2px;background:#000;"></div>
<div style="left:431.6px;top:398.6px;width:2.4px;height:167.6px;background:linear-gradient(90deg,#fff,#bdbdbd 50%,#fff);"></div>
<div style="left:613.1px;top:398.6px;width:2.4px;height:167.6px;background:linear-gradient(90deg,#fff,#bdbdbd 50%,#fff);"></div>
<div class="t" style="left:7px;top:573.8px;font-size:5.15px;">lh.pial</div>
<div style="left:686.3px;top:570.4px;width:95.4px;height:12.8px;border:1px solid #d0d0d0;background:#fff;border-radius:1px;"></div>
<div style="left:781.2px;top:570.4px;width:14.4px;height:12.8px;border:1px solid #d4d4d4;border-left:1px solid #a4a4a4;background:#fff;border-radius:1px;"></div>
</div></body></html>
